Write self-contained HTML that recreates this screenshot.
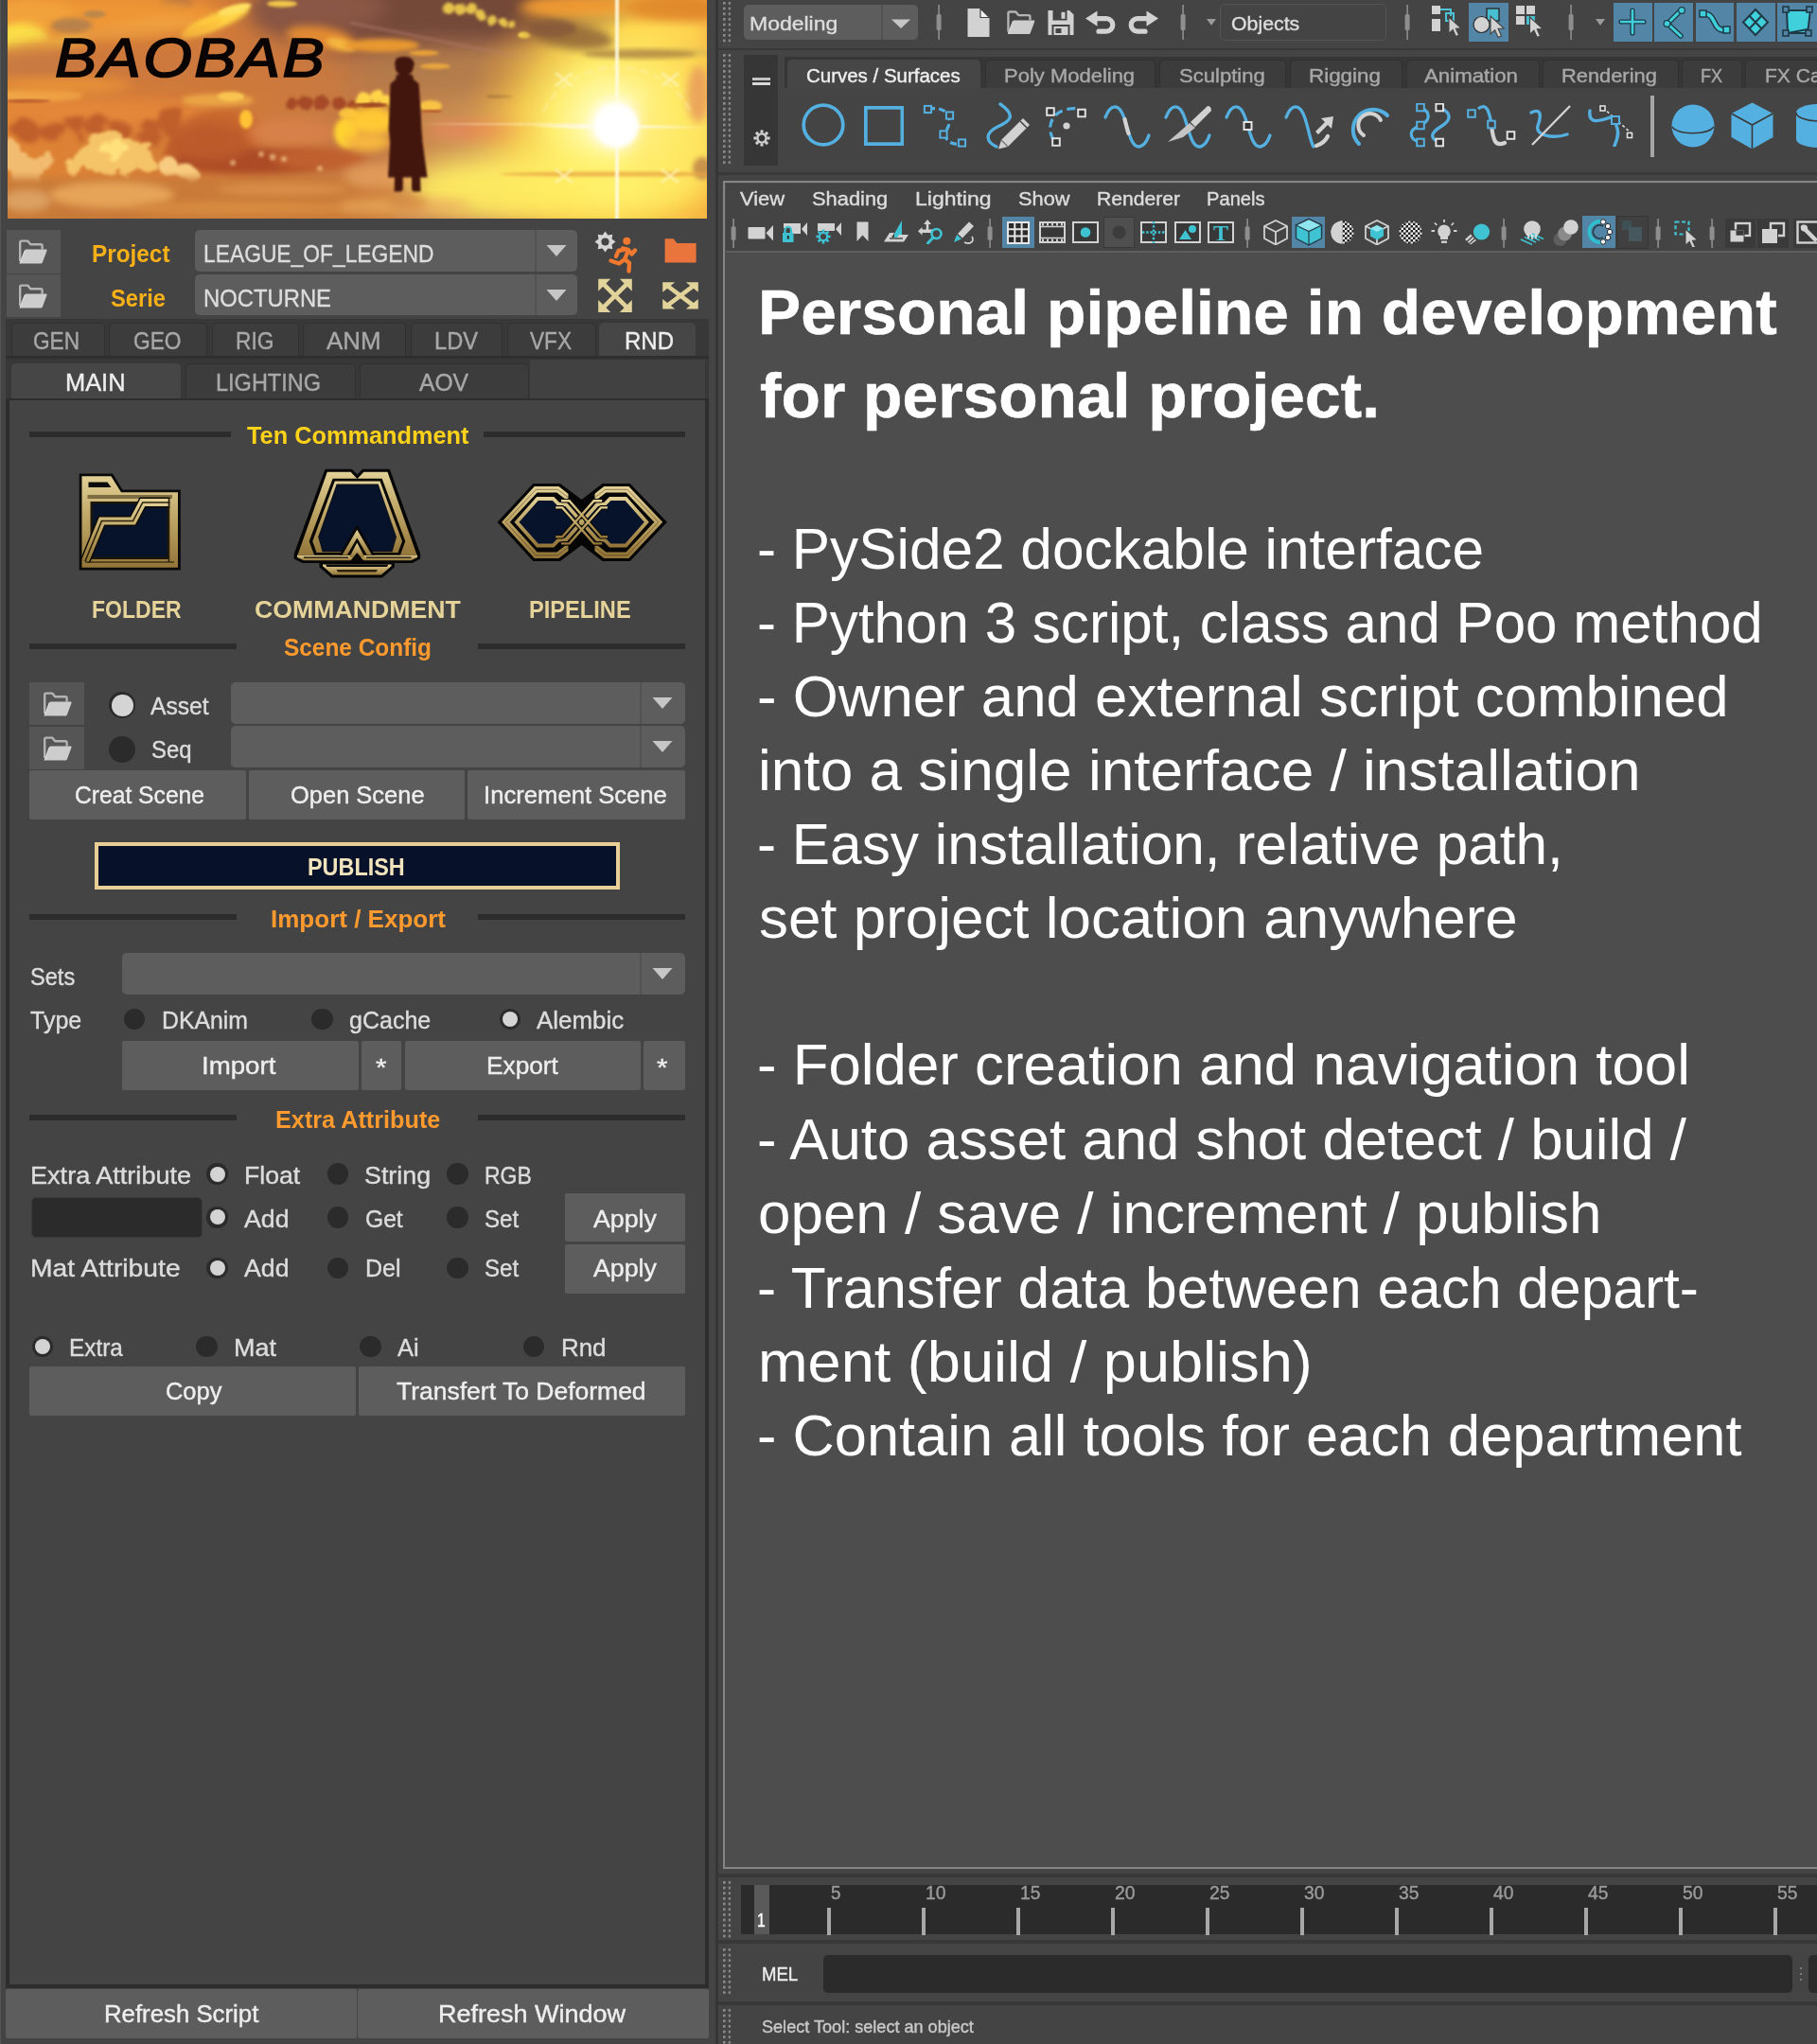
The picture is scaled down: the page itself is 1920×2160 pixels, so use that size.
<!DOCTYPE html>
<html lang="en">
<head>
<meta charset="utf-8">
<title>Baobab pipeline</title>
<style>
html,body{margin:0;padding:0;}
body{width:1920px;height:2160px;overflow:hidden;background:#444;position:relative;font-family:"Liberation Sans",sans-serif;}
.sec{position:absolute;left:0;top:0;width:0;height:0;}
.b{position:absolute;display:block;box-sizing:border-box;}
.t{position:absolute;display:inline-block;white-space:pre;transform-origin:0 0;}
.u{-webkit-text-stroke:0.4px;}
.ttl{-webkit-text-stroke:0.5px;}
.bao{-webkit-text-stroke:1.7px #0a0503;letter-spacing:2px;filter:blur(0.5px);}
</style>
</head>
<body>
<main id="maya-workspace" class="sec">
<div class="b" style="left:755.5px;top:0px;width:3.5px;height:2160px;background:#363636;"></div>
<div class="b" style="left:758.5px;top:50.6px;width:1161.5px;height:2.8px;background:#383838;"></div>
<svg class="b" style="left:764.15px;top:2.25px;" width="8.4" height="45.36" viewBox="0 0 8.4 45.36"><defs><pattern id="dp1" width="5.7" height="5.67" patternUnits="userSpaceOnUse"><rect x="0" y="0" width="2.5" height="2.5" rx="0.4" fill="#929292"/></pattern></defs><rect x="0" y="0" width="8.3" height="45.36" fill="url(#dp1)"/></svg>
<div class="b" style="left:785.6px;top:4.6px;width:184.1px;height:37.2px;background:#5d5d5d;border-radius:5px;"></div>
<div class="b" style="left:930.6px;top:4.6px;width:2px;height:37.2px;background:#525252;"></div>
<svg class="b" style="left:942px;top:19.5px;" width="20" height="10.5" viewBox="0 0 20 10.5"><path d="M0 0.5 H20 L10 10 Z" fill="#c6c6c6"/></svg>
<span class="t u" style="left:791.8px;top:15.05px;font-size:20.5px;line-height:20.5px;color:#dcdcdc;transform:scaleX(1.1202);">Modeling</span>
<svg class="b" style="left:987.6px;top:5px;" width="8" height="37" viewBox="0 0 8 37"><rect x="3.3" y="0" width="1.6" height="37" fill="#8e8e8e"/><rect x="1.6" y="9.99" width="5" height="17.02" rx="1.5" fill="#8e8e8e"/></svg>
<svg class="b" style="left:1021px;top:8px;" width="26" height="32" viewBox="0 0 26 32"><path d="M1.5 1 H15 L24.5 10.5 V31 H1.5 Z" fill="#d2d2d2"/><path d="M15 1 V10.5 H24.5 Z" fill="#f2f2f2" stroke="#444" stroke-width="1.2"/></svg>
<svg class="b" style="left:1060.5px;top:9px;" width="35" height="29.5" viewBox="0 0 33 30"><path d="M3.2 25 V5.2 Q3.2 3.6 4.8 3.6 H11.2 L14.2 7.2 H25.2 Q26.6 7.2 26.6 8.8 V12.5" fill="none" stroke="#b4b4b4" stroke-width="2.4" stroke-linejoin="round"/><path d="M3 27.5 L8.2 13.6 Q8.6 12.6 9.8 12.6 H30.6 Q32 12.6 31.5 14 L26.8 26.6 Q26.4 27.5 25.2 27.5 Z" fill="#cdcdcd"/><path d="M3 27.5 L8.2 13.6" stroke="#e4e4e4" stroke-width="1" fill="none"/></svg>
<svg class="b" style="left:1105.5px;top:8.5px;" width="30" height="30" viewBox="0 0 30 30"><path d="M1.5 2 H24 L28.5 6.5 V28 H1.5 Z" fill="#d2d2d2"/><rect x="6.5" y="2" width="15" height="10.5" fill="#444"/><rect x="15.5" y="3.8" width="4" height="7" fill="#d2d2d2"/><rect x="5.5" y="17" width="19" height="11" fill="#444"/><rect x="7.5" y="19" width="15" height="9" fill="#d2d2d2"/><rect x="9.5" y="21" width="6" height="5" fill="#444"/></svg>
<svg class="b" style="left:1146px;top:11px;" width="34" height="25" viewBox="0 0 34 25"><g><path d="M13 8.6 H23 A6.8 6.8 0 0 1 23 22.2 H15" fill="none" stroke="#d2d2d2" stroke-width="5.2" stroke-linecap="round"/><path d="M1 8.6 L13.5 0.5 V16.8 Z" fill="#d2d2d2"/></g></svg>
<svg class="b" style="left:1191px;top:11px;" width="34" height="25" viewBox="0 0 34 25"><g transform="translate(34 0) scale(-1 1)"><path d="M13 8.6 H23 A6.8 6.8 0 0 1 23 22.2 H15" fill="none" stroke="#d2d2d2" stroke-width="5.2" stroke-linecap="round"/><path d="M1 8.6 L13.5 0.5 V16.8 Z" fill="#d2d2d2"/></g></svg>
<svg class="b" style="left:1245.7px;top:5px;" width="8" height="37" viewBox="0 0 8 37"><rect x="3.3" y="0" width="1.6" height="37" fill="#8e8e8e"/><rect x="1.6" y="9.99" width="5" height="17.02" rx="1.5" fill="#8e8e8e"/></svg>
<svg class="b" style="left:1274.6px;top:20px;" width="10" height="7" viewBox="0 0 10 7"><path d="M0 0 H10 L5 7 Z" fill="#9a9a9a"/></svg>
<div class="b" style="left:1289.4px;top:3.8px;width:175.3px;height:39.2px;background:#444;border-radius:5px;border:1.5px solid #545454;"></div>
<span class="t u" style="left:1300.5px;top:15.05px;font-size:20.5px;line-height:20.5px;color:#dcdcdc;transform:scaleX(1.0388);">Objects</span>
<svg class="b" style="left:1483.3px;top:5px;" width="8" height="37" viewBox="0 0 8 37"><rect x="3.3" y="0" width="1.6" height="37" fill="#8e8e8e"/><rect x="1.6" y="9.99" width="5" height="17.02" rx="1.5" fill="#8e8e8e"/></svg>
<svg class="b" style="left:1511px;top:5px;" width="36" height="36" viewBox="0 0 36 36"><rect x="2" y="1" width="9" height="9" fill="#d2d2d2"/><rect x="2" y="15" width="9" height="9" fill="#d2d2d2"/><rect x="2" y="26" width="7" height="3" fill="#d2d2d2" opacity="0"/><rect x="2" y="15" width="9" height="9" fill="#d2d2d2"/><rect x="2" y="20" width="9" height="9" fill="#d2d2d2" opacity="0"/><path d="M11 5 H22 V12" fill="none" stroke="#4fc3d6" stroke-width="2"/><rect x="17" y="9" width="8" height="8" fill="none" stroke="#4fc3d6" stroke-width="2"/><rect x="2" y="19" width="9" height="9" fill="#d2d2d2"/><path transform="translate(20 13) scale(1.05)" d="M0 0 L0 16.5 L4 12.8 L7 19.5 L10 18.2 L7 11.6 L12.3 11.3 Z" fill="#d2d2d2" stroke="#444" stroke-width="1"/></svg>
<div class="b" style="left:1552px;top:2.8px;width:41.6px;height:41.2px;background:#5285a6;"></div>
<svg class="b" style="left:1553px;top:3.5px;" width="40" height="40" viewBox="0 0 40 40"><rect x="18" y="5" width="13" height="13" fill="#47bfd0" stroke="#2b2b2b" stroke-width="1.4"/><circle cx="12.5" cy="22" r="8.5" fill="#d2d2d2" stroke="#2b2b2b" stroke-width="1.2"/><path transform="translate(22 13) scale(1.15)" d="M0 0 L0 16.5 L4 12.8 L7 19.5 L10 18.2 L7 11.6 L12.3 11.3 Z" fill="#d2d2d2" stroke="#444" stroke-width="1"/></svg>
<svg class="b" style="left:1600.5px;top:5px;" width="34" height="36" viewBox="0 0 34 36"><rect x="1" y="1" width="9" height="9" fill="#d2d2d2"/><rect x="12" y="1" width="9" height="9" fill="#d2d2d2"/><rect x="1" y="12" width="9" height="9" fill="#d2d2d2"/><rect x="12" y="12" width="9" height="9" fill="#47bfd0"/><path transform="translate(15.5 13) scale(1.1)" d="M0 0 L0 16.5 L4 12.8 L7 19.5 L10 18.2 L7 11.6 L12.3 11.3 Z" fill="#d2d2d2" stroke="#444" stroke-width="1"/></svg>
<svg class="b" style="left:1656px;top:5px;" width="8" height="37" viewBox="0 0 8 37"><rect x="3.3" y="0" width="1.6" height="37" fill="#8e8e8e"/><rect x="1.6" y="9.99" width="5" height="17.02" rx="1.5" fill="#8e8e8e"/></svg>
<svg class="b" style="left:1685.7px;top:20px;" width="10" height="7" viewBox="0 0 10 7"><path d="M0 0 H10 L5 7 Z" fill="#9a9a9a"/></svg>
<div class="b" style="left:1704.6px;top:2.8px;width:41.1px;height:41.2px;background:#5285a6;"></div>
<svg class="b" style="left:1705.15px;top:3.4px;" width="40" height="40" viewBox="0 0 40 40"><path d="M20 8 V32 M8 20 H32" stroke="#1f3a46" stroke-width="5.2" stroke-linecap="round"/><path d="M20 8 V32 M8 20 H32" stroke="#3fd0dc" stroke-width="2.6" stroke-linecap="round"/></svg>
<div class="b" style="left:1748px;top:2.8px;width:41px;height:41.2px;background:#5285a6;"></div>
<svg class="b" style="left:1748.5px;top:3.4px;" width="40" height="40" viewBox="0 0 40 40"><path d="M27 8 L13 22 L27 35" fill="none" stroke="#1f3a46" stroke-width="5.5" stroke-linecap="round" stroke-linejoin="round"/><path d="M27 8 L13 22 L27 35" fill="none" stroke="#3fd0dc" stroke-width="3" stroke-linecap="round" stroke-linejoin="round"/><circle cx="28" cy="8" r="3.4" fill="#3fd0dc" stroke="#1f3a46" stroke-width="1.2"/><circle cx="12.5" cy="22" r="3.4" fill="#3fd0dc" stroke="#1f3a46" stroke-width="1.2"/></svg>
<div class="b" style="left:1791.7px;top:2.8px;width:40.7px;height:41.2px;background:#5285a6;"></div>
<svg class="b" style="left:1792.05px;top:3.4px;" width="40" height="40" viewBox="0 0 40 40"><path d="M8 12 C22 10 16 30 32 29" fill="none" stroke="#1f3a46" stroke-width="6.5"/><path d="M8 12 C22 10 16 30 32 29" fill="none" stroke="#3fd0dc" stroke-width="3.6"/><rect x="4" y="8" width="7" height="7" fill="#3fd0dc" stroke="#1f3a46" stroke-width="1.5"/><rect x="29" y="25" width="7" height="7" fill="#3fd0dc" stroke="#1f3a46" stroke-width="1.5"/></svg>
<div class="b" style="left:1835.2px;top:2.8px;width:40.4px;height:41.2px;background:#5285a6;"></div>
<svg class="b" style="left:1835.4px;top:3.4px;" width="40" height="40" viewBox="0 0 40 40"><path d="M20 7 L33 20.5 L20 34 L7 20.5 Z" fill="#3fd0dc" stroke="#1f3a46" stroke-width="2"/><path d="M13.5 13.8 L26.5 27.3 M26.5 13.8 L13.5 27.3" stroke="#1f3a46" stroke-width="2"/></svg>
<div class="b" style="left:1878.4px;top:2.8px;width:42.6px;height:41.2px;background:#5285a6;"></div>
<svg class="b" style="left:1879.5px;top:3.4px;" width="40" height="40" viewBox="0 0 40 40"><path d="M8 8 H33 L30 32 H9 Z" fill="#3fd0dc" stroke="#1f3a46" stroke-width="2"/><path d="M9 32 L30 28" stroke="#1f3a46" stroke-width="2"/><rect x="4" y="4" width="6" height="6" fill="#5285a6" stroke="#1f3a46" stroke-width="1.6"/><rect x="29" y="4" width="6" height="6" fill="#5285a6" stroke="#1f3a46" stroke-width="1.6"/><rect x="4" y="29" width="6" height="6" fill="#5285a6" stroke="#1f3a46" stroke-width="1.6"/><rect x="28" y="29" width="6" height="6" fill="#5285a6" stroke="#1f3a46" stroke-width="1.6"/></svg>
<svg class="b" style="left:764.15px;top:57.05px;" width="8.4" height="119.07" viewBox="0 0 8.4 119.07"><defs><pattern id="dp2" width="5.7" height="5.67" patternUnits="userSpaceOnUse"><rect x="0" y="0" width="2.5" height="2.5" rx="0.4" fill="#929292"/></pattern></defs><rect x="0" y="0" width="8.3" height="119.07" fill="url(#dp2)"/></svg>
<div class="b" style="left:785.5px;top:57.8px;width:36.7px;height:117.7px;background:#363636;"></div>
<div class="b" style="left:794.6px;top:81.7px;width:19px;height:3.3px;background:#c4c4c4;"></div>
<div class="b" style="left:794.6px;top:87.2px;width:19px;height:2.6px;background:#d8d8d8;"></div>
<svg class="b" style="left:794.8px;top:136.4px;" width="20" height="20" viewBox="0 0 20 20"><g transform="translate(10 10)" fill="none" stroke="#d0d0d0"><circle r="4.6" stroke-width="2.4"/><path d="M0 -5.4 V-8.6" stroke-width="3" transform="rotate(0)"/><path d="M0 -5.4 V-8.6" stroke-width="3" transform="rotate(45)"/><path d="M0 -5.4 V-8.6" stroke-width="3" transform="rotate(90)"/><path d="M0 -5.4 V-8.6" stroke-width="3" transform="rotate(135)"/><path d="M0 -5.4 V-8.6" stroke-width="3" transform="rotate(180)"/><path d="M0 -5.4 V-8.6" stroke-width="3" transform="rotate(225)"/><path d="M0 -5.4 V-8.6" stroke-width="3" transform="rotate(270)"/><path d="M0 -5.4 V-8.6" stroke-width="3" transform="rotate(315)"/></g></svg>
<div class="b" style="left:828.5px;top:59.6px;width:1091.5px;height:33.1px;background:#363636;"></div>
<div class="b" style="left:832px;top:63px;width:203.6px;height:29.7px;background:#464646;border-radius:5px 5px 0 0;"></div>
<span class="t u" style="left:851.9px;top:69.65px;font-size:20.5px;line-height:20.5px;color:#eee;transform:scaleX(0.9986);">Curves / Surfaces</span>
<div class="b" style="left:1040.8px;top:63px;width:180.2px;height:29.7px;background:#3c3c3c;border-radius:5px 5px 0 0;border:1px solid #313131;border-bottom:none;"></div>
<span class="t u" style="left:1060.5px;top:69.65px;font-size:20.5px;line-height:20.5px;color:#a8a8a8;transform:scaleX(1.0725);">Poly Modeling</span>
<div class="b" style="left:1225px;top:63px;width:134px;height:29.7px;background:#3c3c3c;border-radius:5px 5px 0 0;border:1px solid #313131;border-bottom:none;"></div>
<span class="t u" style="left:1246px;top:69.65px;font-size:20.5px;line-height:20.5px;color:#a8a8a8;transform:scaleX(1.0754);">Sculpting</span>
<div class="b" style="left:1363px;top:63px;width:118.5px;height:29.7px;background:#3c3c3c;border-radius:5px 5px 0 0;border:1px solid #313131;border-bottom:none;"></div>
<span class="t u" style="left:1383px;top:69.65px;font-size:20.5px;line-height:20.5px;color:#a8a8a8;transform:scaleX(1.0916);">Rigging</span>
<div class="b" style="left:1485.6px;top:63px;width:141.1px;height:29.7px;background:#3c3c3c;border-radius:5px 5px 0 0;border:1px solid #313131;border-bottom:none;"></div>
<span class="t u" style="left:1505px;top:69.65px;font-size:20.5px;line-height:20.5px;color:#a8a8a8;transform:scaleX(1.0859);">Animation</span>
<div class="b" style="left:1630px;top:63px;width:143.5px;height:29.7px;background:#3c3c3c;border-radius:5px 5px 0 0;border:1px solid #313131;border-bottom:none;"></div>
<span class="t u" style="left:1650px;top:69.65px;font-size:20.5px;line-height:20.5px;color:#a8a8a8;transform:scaleX(1.0656);">Rendering</span>
<div class="b" style="left:1776.7px;top:63px;width:64.3px;height:29.7px;background:#3c3c3c;border-radius:5px 5px 0 0;border:1px solid #313131;border-bottom:none;"></div>
<span class="t u" style="left:1797px;top:69.65px;font-size:20.5px;line-height:20.5px;color:#a8a8a8;transform:scaleX(0.8778);">FX</span>
<div class="b" style="left:1844.4px;top:63px;width:145.6px;height:29.7px;background:#3c3c3c;border-radius:5px 5px 0 0;border:1px solid #313131;border-bottom:none;"></div>
<span class="t u" style="left:1865px;top:69.65px;font-size:20.5px;line-height:20.5px;color:#a8a8a8;transform:scaleX(1.0270);">FX Caching</span>
<svg class="b" style="left:847.3px;top:109.4px;" width="46" height="46" viewBox="0 0 46 46"><circle cx="23" cy="23" r="20.8" fill="none" stroke="#54b0e0" stroke-width="3.7"/></svg>
<svg class="b" style="left:913.2px;top:112px;" width="42.2" height="42" viewBox="0 0 42.2 42"><rect x="1.8" y="1.8" width="38.6" height="38.4" fill="none" stroke="#54b0e0" stroke-width="3.8"/></svg>
<svg class="b" style="left:974.5px;top:109.5px;" width="48" height="47" viewBox="0 0 48 47"><path d="M6 5 C26 2 32 14 26 26 C20 38 30 44 42 42" fill="none" stroke="#54b0e0" stroke-width="3.2" stroke-dasharray="7 4"/><rect x="1.9" y="1.9" width="7.2" height="7.2" fill="#444" stroke="#54b0e0" stroke-width="2"/><rect x="24.9" y="8.4" width="7.2" height="7.2" fill="#444" stroke="#54b0e0" stroke-width="2"/><rect x="18.4" y="28.4" width="7.2" height="7.2" fill="#444" stroke="#54b0e0" stroke-width="2"/><rect x="37.9" y="37.4" width="7.2" height="7.2" fill="#444" stroke="#54b0e0" stroke-width="2"/></svg>
<svg class="b" style="left:1039.5px;top:108px;" width="50" height="50" viewBox="0 0 50 50"><path d="M17 2 C34 14 28 20 14 26 C0 33 2 42 13 47" fill="none" stroke="#54b0e0" stroke-width="3.4" stroke-linecap="round"/><path d="M18 40 L41 17 L48 24 L25 47 L15 49.5 Z" fill="#d2d2d2"/><path d="M38 20 L45 27" stroke="#444" stroke-width="1.6"/><path d="M18 40 L25 47" stroke="#777" stroke-width="1.4"/></svg>
<svg class="b" style="left:1104.5px;top:110px;" width="46" height="46" viewBox="0 0 46 46"><path d="M8 38 C-2 18 12 2 36 5" fill="none" stroke="#54b0e0" stroke-width="3.2" stroke-dasharray="9 5"/><circle cx="22" cy="23" r="3.6" fill="#d2d2d2"/><rect x="1.2" y="4.2" width="7.6" height="7.6" fill="#333" stroke="#e0e0e0" stroke-width="2"/><rect x="34.2" y="5.7" width="7.6" height="7.6" fill="#333" stroke="#e0e0e0" stroke-width="2"/><rect x="7.2" y="36.2" width="7.6" height="7.6" fill="#333" stroke="#e0e0e0" stroke-width="2"/></svg>
<svg class="b" style="left:1165.6px;top:108.8px;overflow:visible;" width="52" height="48" viewBox="0 0 52 48"><path d="M2 15 C7 2 16 -2 22 16 C27 32 30 47 38 46 C43 45 46 40 48 34" fill="none" stroke="#54b0e0" stroke-width="3.4" stroke-linecap="round"/><path d="M22.5 17 C24 23 25 28 26.5 32" fill="none" stroke="#d2d2d2" stroke-width="4.2" stroke-linecap="round"/></svg>
<svg class="b" style="left:1230.4px;top:108.8px;overflow:visible;" width="52" height="48" viewBox="0 0 52 48"><path d="M2 15 C7 2 16 -2 22 16 C27 32 30 47 38 46 C43 45 46 40 48 34" fill="none" stroke="#54b0e0" stroke-width="3.4" stroke-linecap="round"/><path d="M28 20 L46 3 Q50 3 50 8 L33 25 Z" fill="#d2d2d2"/><path d="M4 41 L27 21 L33 26 L20 36 Z" fill="#c4c4c4"/></svg>
<svg class="b" style="left:1294px;top:108.8px;overflow:visible;" width="52" height="48" viewBox="0 0 52 48"><path d="M2 15 C7 2 16 -2 22 16 C27 32 30 47 38 46 C43 45 46 40 48 34" fill="none" stroke="#54b0e0" stroke-width="3.4" stroke-linecap="round"/><rect x="20.5" y="20" width="8" height="8" fill="#333" stroke="#e4e4e4" stroke-width="2"/></svg>
<svg class="b" style="left:1357px;top:108.8px;overflow:visible;" width="52" height="48" viewBox="0 0 52 48"><path d="M2 15 C7 2 16 -2 22 16 C27 32 28 42 31 46" fill="none" stroke="#54b0e0" stroke-width="3.4" stroke-linecap="round"/><path d="M34 45 C40 43 44 39 46 35" fill="none" stroke="#d2d2d2" stroke-width="4.2" stroke-linecap="round"/><path d="M33 30 L43 20 L39 16 L52 14 L50 27 L46 23 L36 33 Z" fill="#d2d2d2"/></svg>
<svg class="b" style="left:1424px;top:108.5px;" width="50" height="48" viewBox="0 0 50 48"><path d="M12 43 A21 21 0 1 1 42 13" fill="none" stroke="#54b0e0" stroke-width="4" stroke-linecap="round"/><path d="M17 34 A12.5 12.5 0 1 1 35 18" fill="none" stroke="#d2d2d2" stroke-width="4" stroke-linecap="round"/></svg>
<svg class="b" style="left:1486.5px;top:108.5px;" width="47" height="48" viewBox="0 0 47 48"><path d="M14 4.5 C25 9 25 18 14 23.5 C1 28 1 38 14 41.5" fill="none" stroke="#54b0e0" stroke-width="3.2"/><path d="M34.2 4.5 C47 10 47 18 36 24.5 C25 31 23 37 34.2 41.5" fill="none" stroke="#54b0e0" stroke-width="3.4"/><rect x="10.2" y="0.7" width="7.6" height="7.6" fill="#444" stroke="#54b0e0" stroke-width="2"/><rect x="10.2" y="19.7" width="7.6" height="7.6" fill="#444" stroke="#54b0e0" stroke-width="2"/><rect x="10.2" y="37.7" width="7.6" height="7.6" fill="#444" stroke="#54b0e0" stroke-width="2"/><rect x="30.4" y="0.7" width="7.6" height="7.6" fill="#333" stroke="#e0e0e0" stroke-width="2"/><rect x="30.4" y="37.7" width="7.6" height="7.6" fill="#333" stroke="#e0e0e0" stroke-width="2"/></svg>
<svg class="b" style="left:1549.7px;top:108.6px;" width="52" height="47" viewBox="0 0 52 47"><path d="M12 6 C22 -2 24 12 26 22" fill="none" stroke="#54b0e0" stroke-width="3.4"/><path d="M26 24 C28 40 30 46 40 42" fill="none" stroke="#d2d2d2" stroke-width="4.2" stroke-linecap="round"/><rect x="1.2" y="7.2" width="7.6" height="7.6" fill="#444" stroke="#54b0e0" stroke-width="2"/><rect x="22.2" y="18.7" width="7.6" height="7.6" fill="#444" stroke="#54b0e0" stroke-width="2"/><rect x="42.7" y="30.2" width="7.6" height="7.6" fill="#333" stroke="#e0e0e0" stroke-width="2"/></svg>
<svg class="b" style="left:1615.6px;top:110.5px;" width="44" height="44" viewBox="0 0 44 44"><path d="M2 8 C14 2 12 14 9 22 C6 32 24 36 40 31" fill="none" stroke="#54b0e0" stroke-width="3.4" stroke-linecap="round"/><path d="M3 42 L43 1" stroke="#d2d2d2" stroke-width="2.4"/></svg>
<svg class="b" style="left:1678px;top:110.8px;" width="49" height="44" viewBox="0 0 49 44"><path d="M2 6 C0 22 14 16 24 13 M30 22 C34 30 30 38 28 43" fill="none" stroke="#54b0e0" stroke-width="3.4" stroke-linecap="round"/><path d="M16 3 L46 30" stroke="#d8d8d8" stroke-width="1.6" stroke-dasharray="3 2.5"/><rect x="13" y="1" width="5" height="5" fill="#333" stroke="#e0e0e0" stroke-width="1.6"/><rect x="25" y="12" width="8" height="8" fill="#444" stroke="#54b0e0" stroke-width="2"/><rect x="41.5" y="29.5" width="5" height="5" fill="#333" stroke="#e0e0e0" stroke-width="1.6"/></svg>
<div class="b" style="left:1744px;top:100.6px;width:4.4px;height:65.8px;background:#a6a6a6;"></div>
<svg class="b" style="left:1765.8px;top:109.8px;" width="46" height="46" viewBox="0 0 46 46"><circle cx="23" cy="23" r="22.5" fill="#54b0e0"/><path d="M0.8 24 C8 33 38 33 45.2 24" fill="none" stroke="#3a3a3a" stroke-width="1.6"/></svg>
<svg class="b" style="left:1829.4px;top:107.5px;" width="45" height="50" viewBox="0 0 45 50"><path d="M22.5 0.5 L44.5 12 V37 L22.5 49.5 L0.5 37 V12 Z" fill="#54b0e0"/><path d="M0.5 12 L22.5 24 L44.5 12 M22.5 24 V49.5" fill="none" stroke="#3a3a3a" stroke-width="1.6"/></svg>
<svg class="b" style="left:1897.6px;top:109px;" width="46" height="48" viewBox="0 0 46 48"><path d="M0 10 A23 9 0 0 1 46 10 V38 A23 9 0 0 1 0 38 Z" fill="#54b0e0"/><path d="M0 10 A23 9 0 0 0 46 10" fill="none" stroke="#3a3a3a" stroke-width="1.6"/></svg>
<div class="b" style="left:758.5px;top:182.4px;width:1161.5px;height:2.8px;background:#383838;"></div>
<div class="b" style="left:764px;top:191px;width:1157px;height:1783.5px;background:#4d4d4d;border:2.6px solid #858585;border-right:none;"></div>
<div class="b" style="left:766.6px;top:193.6px;width:1153.4px;height:71.2px;background:#444;"></div>
<div class="b" style="left:766.6px;top:264.8px;width:1153.4px;height:2.4px;background:#5e5e5e;"></div>
<span class="t u" style="left:781.8px;top:200.25px;font-size:20.5px;line-height:20.5px;color:#dcdcdc;transform:scaleX(1.0708);">View</span>
<span class="t u" style="left:857.7px;top:200.25px;font-size:20.5px;line-height:20.5px;color:#dcdcdc;transform:scaleX(1.0660);">Shading</span>
<span class="t u" style="left:966.5px;top:200.25px;font-size:20.5px;line-height:20.5px;color:#dcdcdc;transform:scaleX(1.1210);">Lighting</span>
<span class="t u" style="left:1076px;top:200.25px;font-size:20.5px;line-height:20.5px;color:#dcdcdc;transform:scaleX(1.0628);">Show</span>
<span class="t u" style="left:1158.9px;top:200.25px;font-size:20.5px;line-height:20.5px;color:#dcdcdc;transform:scaleX(1.0308);">Renderer</span>
<span class="t u" style="left:1275.4px;top:200.25px;font-size:20.5px;line-height:20.5px;color:#dcdcdc;transform:scaleX(0.9827);">Panels</span>
<svg class="b" style="left:770.7px;top:230.5px;" width="8" height="31" viewBox="0 0 8 31"><rect x="3.3" y="0" width="1.6" height="31.0" fill="#8e8e8e"/><rect x="1.6" y="8.37" width="5" height="14.26" rx="1.5" fill="#8e8e8e"/></svg>
<svg class="b" style="left:1042px;top:230.5px;" width="8" height="31" viewBox="0 0 8 31"><rect x="3.3" y="0" width="1.6" height="31.0" fill="#8e8e8e"/><rect x="1.6" y="8.37" width="5" height="14.26" rx="1.5" fill="#8e8e8e"/></svg>
<svg class="b" style="left:1313.7px;top:230.5px;" width="8" height="31" viewBox="0 0 8 31"><rect x="3.3" y="0" width="1.6" height="31.0" fill="#8e8e8e"/><rect x="1.6" y="8.37" width="5" height="14.26" rx="1.5" fill="#8e8e8e"/></svg>
<svg class="b" style="left:1584.5px;top:230.5px;" width="8" height="31" viewBox="0 0 8 31"><rect x="3.3" y="0" width="1.6" height="31.0" fill="#8e8e8e"/><rect x="1.6" y="8.37" width="5" height="14.26" rx="1.5" fill="#8e8e8e"/></svg>
<svg class="b" style="left:1748.4px;top:230.5px;" width="8" height="31" viewBox="0 0 8 31"><rect x="3.3" y="0" width="1.6" height="31.0" fill="#8e8e8e"/><rect x="1.6" y="8.37" width="5" height="14.26" rx="1.5" fill="#8e8e8e"/></svg>
<svg class="b" style="left:1805.3px;top:230.5px;" width="8" height="31" viewBox="0 0 8 31"><rect x="3.3" y="0" width="1.6" height="31.0" fill="#8e8e8e"/><rect x="1.6" y="8.37" width="5" height="14.26" rx="1.5" fill="#8e8e8e"/></svg>
<svg class="b" style="left:790px;top:235.5px;" width="28" height="20" viewBox="0 0 28 20"><rect x="0.5" y="4" width="18" height="12.5" rx="1" fill="#d2d2d2"/><path d="M27 2 V18.5 L19.5 10.2 Z" fill="#d2d2d2"/></svg>
<svg class="b" style="left:826.4px;top:234.5px;" width="28" height="23" viewBox="0 0 28 23"><path d="M2 1 H20 V12 H10 V6 H2 Z" fill="#d2d2d2"/><path d="M27 0 V14 L21 7 Z" fill="#d2d2d2"/><rect x="1" y="11" width="11.5" height="10" fill="#3fc3d3"/><path d="M3.5 11 V8 A3.2 3.2 0 0 1 10 8 V11" fill="none" stroke="#3fc3d3" stroke-width="2.2"/><rect x="5.8" y="14" width="2" height="3.6" fill="#2b2b2b"/></svg>
<svg class="b" style="left:862px;top:234.5px;" width="28" height="24" viewBox="0 0 28 24"><path d="M2 1 H20 V9 H2 Z" fill="#d2d2d2"/><path d="M27 0 V14 L21 7 Z" fill="#d2d2d2"/><g transform="translate(8 15)" fill="none" stroke="#3fc3d3"><circle r="4.2" stroke-width="2.2" fill="#444"/><path d="M0 -5 V-7.6" stroke-width="2.6" transform="rotate(0)"/><path d="M0 -5 V-7.6" stroke-width="2.6" transform="rotate(45)"/><path d="M0 -5 V-7.6" stroke-width="2.6" transform="rotate(90)"/><path d="M0 -5 V-7.6" stroke-width="2.6" transform="rotate(135)"/><path d="M0 -5 V-7.6" stroke-width="2.6" transform="rotate(180)"/><path d="M0 -5 V-7.6" stroke-width="2.6" transform="rotate(225)"/><path d="M0 -5 V-7.6" stroke-width="2.6" transform="rotate(270)"/><path d="M0 -5 V-7.6" stroke-width="2.6" transform="rotate(315)"/></g></svg>
<svg class="b" style="left:904.5px;top:234px;" width="13" height="22" viewBox="0 0 13 22"><path d="M0.5 0.5 H12.5 V21 L6.5 14.5 L0.5 21 Z" fill="#d2d2d2"/></svg>
<svg class="b" style="left:934px;top:233px;" width="26" height="23" viewBox="0 0 26 23"><path d="M11 14 L19 0 V15 L11 22 Z" fill="#3fc3d3"/><path d="M0 22.5 L6 13 H11 L8 18 H14 L16 15 H26 L21 22.5 Z" fill="#d2d2d2"/><path d="M6 19 H20" stroke="#444" stroke-width="1.4"/></svg>
<svg class="b" style="left:969.7px;top:232px;" width="27" height="26" viewBox="0 0 27 26"><path d="M10 0 L14 5 H11.3 V10.5 H16 V14 H4.5 V16.5 L0 12.2 L4.5 8 V10.5 H8.7 V5 H6 Z" fill="#d2d2d2"/><circle cx="19.5" cy="15" r="5" fill="none" stroke="#3fc3d3" stroke-width="2.6"/><path d="M16 19 L10.5 25" stroke="#3fc3d3" stroke-width="3" stroke-linecap="round"/></svg>
<svg class="b" style="left:1007px;top:233px;" width="24" height="26" viewBox="0 0 24 26"><path d="M5 14 L17 1.5 L22 6 L10 18.5 Z" fill="#d2d2d2"/><path d="M4 15 L9 19.5 L1 23 Z" fill="#3fc3d3"/><path d="M12 23 C18 26 23 22 20 17" fill="none" stroke="#d2d2d2" stroke-width="1.6"/></svg>
<div class="b" style="left:1058.6px;top:228.7px;width:34.1px;height:33.8px;background:#5285a6;"></div>
<svg class="b" style="left:1063.6px;top:233.6px;" width="24" height="24" viewBox="0 0 24 24"><rect x="1" y="1" width="22" height="22" fill="#2b2b2b" stroke="#e6e6e6" stroke-width="2"/><path d="M8.3 1 V23 M15.6 1 V23 M1 8.3 H23 M1 15.6 H23" stroke="#e6e6e6" stroke-width="2"/></svg>
<svg class="b" style="left:1098px;top:234.3px;" width="28" height="23" viewBox="0 0 28 23"><rect x="1" y="1" width="26" height="21" fill="#383838" stroke="#d2d2d2" stroke-width="2"/><path d="M1 5.5 H27 M1 17.5 H27" stroke="#d2d2d2" stroke-width="1.6"/><rect x="3" y="2" width="2" height="2.5" fill="#d2d2d2"/><rect x="3" y="18.5" width="2" height="2.5" fill="#d2d2d2"/><rect x="8" y="2" width="2" height="2.5" fill="#d2d2d2"/><rect x="8" y="18.5" width="2" height="2.5" fill="#d2d2d2"/><rect x="13" y="2" width="2" height="2.5" fill="#d2d2d2"/><rect x="13" y="18.5" width="2" height="2.5" fill="#d2d2d2"/><rect x="18" y="2" width="2" height="2.5" fill="#d2d2d2"/><rect x="18" y="18.5" width="2" height="2.5" fill="#d2d2d2"/><rect x="23" y="2" width="2" height="2.5" fill="#d2d2d2"/><rect x="23" y="18.5" width="2" height="2.5" fill="#d2d2d2"/></svg>
<svg class="b" style="left:1133px;top:234.3px;" width="28" height="23" viewBox="0 0 28 23"><rect x="1" y="1" width="26" height="21" fill="#383838" stroke="#d2d2d2" stroke-width="2"/><circle cx="14" cy="11.5" r="5.3" fill="#3fc3d3"/></svg>
<div class="b" style="left:1166px;top:229px;width:33px;height:33px;background:#4f4f4f;border:1.5px solid #3a3a3a;"></div>
<svg class="b" style="left:1166px;top:229px;" width="33" height="33" viewBox="0 0 33 33"><circle cx="16.5" cy="16.5" r="7" fill="#3c3c3c"/></svg>
<svg class="b" style="left:1204.8px;top:234.3px;" width="28" height="23" viewBox="0 0 28 23"><rect x="1" y="1" width="26" height="21" fill="#383838" stroke="#d2d2d2" stroke-width="2"/><path d="M14 0 V23 M2 11.5 H26" stroke="#3fc3d3" stroke-width="2.4" stroke-dasharray="2.4 1.8"/></svg>
<svg class="b" style="left:1240.5px;top:234.3px;" width="28" height="23" viewBox="0 0 28 23"><rect x="1" y="1" width="26" height="21" fill="#383838" stroke="#d2d2d2" stroke-width="2"/><circle cx="19" cy="8" r="4" fill="#3fc3d3"/><path d="M5 19 L11.5 9 L18 19 Z" fill="#3fc3d3"/></svg>
<svg class="b" style="left:1276.2px;top:234.3px;" width="28" height="23" viewBox="0 0 28 23"><rect x="1" y="1" width="26" height="21" fill="#383838" stroke="#d2d2d2" stroke-width="2"/></svg>
<span class="t" style="left:1282.3px;top:235.03px;font-size:23px;line-height:23px;color:#3fc3d3;font-weight:bold;font-family:'Liberation Serif', serif;transform:scaleX(1.0428);">T</span>
<svg class="b" style="left:1334.5px;top:231.5px;" width="26" height="27.5" viewBox="0 0 26 27.5"><path d="M13 1 L25 7 V20 L13 26.5 L1 20 V7 Z" fill="none" stroke="#d2d2d2" stroke-width="1.8" stroke-linejoin="round"/><path d="M1 7 L13 13 L25 7 M13 13 V26.5" fill="none" stroke="#d2d2d2" stroke-width="1.8"/></svg>
<div class="b" style="left:1365.4px;top:228.7px;width:34.6px;height:33.8px;background:#5285a6;"></div>
<svg class="b" style="left:1367.6px;top:230.2px;" width="30" height="30.5" viewBox="0 0 30 30.5"><path d="M15 1.5 L28.5 8 V22 L15 29 L1.5 22 V8 Z" fill="#3fc3d3" stroke="#243a46" stroke-width="1.4" stroke-linejoin="round"/><path d="M15 1.5 L28.5 8 L15 14.5 L1.5 8 Z" fill="#8fe6ee" stroke="#243a46" stroke-width="1.2"/><path d="M15 14.5 V29" stroke="#243a46" stroke-width="1.2"/></svg>
<svg class="b" style="left:1405.5px;top:233px;" width="25" height="25" viewBox="0 0 25 25"><defs><pattern id="ck1" width="5" height="5" patternUnits="userSpaceOnUse"><rect width="5" height="5" fill="#1e1e1e"/><rect width="2.5" height="2.5" fill="#eee"/><rect x="2.5" y="2.5" width="2.5" height="2.5" fill="#eee"/></pattern></defs><circle cx="12.5" cy="12.5" r="12" fill="url(#ck1)"/><path d="M12.5 0.5 A12 12 0 0 0 12.5 24.5 A16 16 0 0 1 12.5 0.5 Z" fill="#d2d2d2"/><path d="M12.5 0.5 A12 12 0 0 0 12.5 24.5 Z" fill="#d2d2d2"/></svg>
<svg class="b" style="left:1441.7px;top:231.5px;" width="26" height="27.5" viewBox="0 0 26 27.5"><path d="M13 1 L25 7 V20 L13 26.5 L1 20 V7 Z" fill="none" stroke="#d2d2d2" stroke-width="1.8" stroke-linejoin="round"/><path d="M1 7 L13 13 L25 7 M13 13 V26.5" fill="none" stroke="#d2d2d2" stroke-width="1.8"/><path d="M13 6 L20 9.5 V17.5 L13 21.5 L6 17.5 V9.5 Z" fill="#3fc3d3"/><path d="M13 6 L20 9.5 L13 13 L6 9.5 Z" fill="#8fe6ee"/></svg>
<svg class="b" style="left:1477.8px;top:233px;" width="25" height="25" viewBox="0 0 25 25"><defs><pattern id="ck2" width="5" height="5" patternUnits="userSpaceOnUse"><rect width="5" height="5" fill="#1e1e1e"/><rect width="2.5" height="2.5" fill="#eee"/><rect x="2.5" y="2.5" width="2.5" height="2.5" fill="#eee"/></pattern></defs><circle cx="12.5" cy="12.5" r="12" fill="url(#ck2)"/></svg>
<svg class="b" style="left:1511.5px;top:232px;" width="28" height="25" viewBox="0 0 28 25"><path d="M14 5.5 A7 7 0 0 1 18 18 V21 H10 V18 A7 7 0 0 1 14 5.5 Z" fill="#d2d2d2"/><rect x="11" y="22.5" width="6" height="2.4" fill="#d2d2d2"/><path d="M14 0 V3 M4 3.5 L6.3 6 M24 3.5 L21.7 6 M0.5 12 H4 M24 12 H27.5" stroke="#d2d2d2" stroke-width="1.8"/></svg>
<svg class="b" style="left:1547.4px;top:234px;" width="28" height="25" viewBox="0 0 28 25"><circle cx="18.5" cy="11" r="8.6" fill="#3fc3d3"/><path d="M1 19 L7 13.5 L13 20 L7 24.5 Z" fill="#d2d2d2"/><path d="M3 21.5 L9.5 15.5 M6 23 L12 17.5" stroke="#444" stroke-width="1.2"/></svg>
<svg class="b" style="left:1605.5px;top:233px;" width="26" height="27" viewBox="0 0 26 27"><circle cx="13" cy="9" r="8.8" fill="#d2d2d2"/><path d="M0 20 L14 26 L26 19 L12 14 Z" fill="none"/><path d="M1 20 L13 25.5 M5 17.5 L17 23 M9 15.5 L21 21 M13 14 L25 19.5" stroke="#3fc3d3" stroke-width="1.6"/><path d="M9 14 V19 M13 15 V20 M17 14.5 V19" stroke="#e8e8e8" stroke-width="1.6"/></svg>
<svg class="b" style="left:1640.5px;top:232px;" width="27" height="28" viewBox="0 0 27 28"><circle cx="7.5" cy="21" r="7" fill="#5e5e5e"/><circle cx="12.5" cy="15" r="7.4" fill="#8a8a8a"/><circle cx="19" cy="8" r="7.8" fill="#d2d2d2"/></svg>
<div class="b" style="left:1672.2px;top:228.4px;width:34.8px;height:34px;background:#5285a6;"></div>
<svg class="b" style="left:1674.6px;top:230.4px;" width="30" height="30" viewBox="0 0 30 30"><path d="M20 5 A11 11 0 1 0 20 25" fill="none" stroke="#2fc0d0" stroke-width="3.6"/><path d="M19 9 A7 7 0 1 0 19 21" fill="none" stroke="#24464f" stroke-width="2"/><circle cx="19" cy="4.5" r="2.7" fill="#f4f4f4" stroke="#2b2b2b" stroke-width="1"/><circle cx="24" cy="9" r="2.7" fill="#f4f4f4" stroke="#2b2b2b" stroke-width="1"/><circle cx="26" cy="15" r="2.7" fill="#f4f4f4" stroke="#2b2b2b" stroke-width="1"/><circle cx="24" cy="21" r="2.7" fill="#f4f4f4" stroke="#2b2b2b" stroke-width="1"/><circle cx="19" cy="25.5" r="2.7" fill="#f4f4f4" stroke="#2b2b2b" stroke-width="1"/></svg>
<div class="b" style="left:1708px;top:228.4px;width:34.3px;height:34.4px;background:#404040;border:1.5px solid #363636;"></div>
<svg class="b" style="left:1708px;top:228.4px;" width="34" height="34" viewBox="0 0 34 34"><rect x="6" y="5" width="10" height="10" fill="#3e5054"/><rect x="13" y="12" width="14" height="15" fill="#46585d"/></svg>
<svg class="b" style="left:1769px;top:233px;" width="27" height="28" viewBox="0 0 27 28"><rect x="1.5" y="1.5" width="14" height="13" fill="none" stroke="#3fc3d3" stroke-width="2.2" stroke-dasharray="4 2.6"/><path transform="translate(12 9) scale(1.05)" d="M0 0 L0 16.5 L4 12.8 L7 19.5 L10 18.2 L7 11.6 L12.3 11.3 Z" fill="#d2d2d2" stroke="#444" stroke-width="1"/></svg>
<div class="b" style="left:1822.5px;top:230.5px;width:32px;height:31px;background:#3a3a3a;"></div>
<svg class="b" style="left:1825px;top:234px;" width="27" height="24" viewBox="0 0 27 24"><rect x="9" y="2" width="15" height="13" fill="none" stroke="#d2d2d2" stroke-width="2.4"/><rect x="3" y="9" width="15" height="13" fill="#d2d2d2" stroke="#3a3a3a" stroke-width="1"/><rect x="9.5" y="9.5" width="8" height="5.2" fill="#3a3a3a"/></svg>
<div class="b" style="left:1857px;top:230.5px;width:33px;height:31px;background:#3a3a3a;"></div>
<svg class="b" style="left:1860px;top:234px;" width="27" height="24" viewBox="0 0 27 24"><path d="M11 8 V2 H25 V15 H19" fill="none" stroke="#d2d2d2" stroke-width="2.4"/><rect x="2" y="8" width="16" height="15" fill="#d2d2d2"/></svg>
<div class="b" style="left:1895px;top:230.5px;width:25px;height:31px;background:#3a3a3a;"></div>
<svg class="b" style="left:1897.6px;top:233px;" width="27" height="25" viewBox="0 0 27 25"><rect x="1.5" y="1.5" width="24" height="22" fill="none" stroke="#d2d2d2" stroke-width="2.4"/><path d="M7 7 L20 20" stroke="#d2d2d2" stroke-width="4.5" stroke-linecap="round"/><circle cx="8.5" cy="8" r="3.6" fill="#d2d2d2"/></svg>
<span class="t ttl" style="left:801.3px;top:296.28px;font-size:67px;line-height:67px;color:#ffffff;font-weight:bold;transform:scaleX(1.0112);">Personal pipeline in development</span>
<span class="t ttl" style="left:803px;top:383.78px;font-size:67px;line-height:67px;color:#ffffff;font-weight:bold;transform:scaleX(1.0111);">for personal project.</span>
<span class="t big" style="left:800px;top:549.86px;font-size:61px;line-height:61px;color:#ffffff;transform:scaleX(0.9891);">- PySide2 dockable interface</span>
<span class="t big" style="left:800px;top:627.86px;font-size:61px;line-height:61px;color:#ffffff;transform:scaleX(0.9857);">- Python 3 script, class and Poo method</span>
<span class="t big" style="left:800px;top:705.76px;font-size:61px;line-height:61px;color:#ffffff;transform:scaleX(1.0127);">- Owner and external script combined</span>
<span class="t big" style="left:800.7px;top:783.76px;font-size:61px;line-height:61px;color:#ffffff;transform:scaleX(1.0187);">into a single interface / installation</span>
<span class="t big" style="left:800px;top:861.66px;font-size:61px;line-height:61px;color:#ffffff;transform:scaleX(0.9891);">- Easy installation, relative path,</span>
<span class="t big" style="left:801.9px;top:939.66px;font-size:61px;line-height:61px;color:#ffffff;transform:scaleX(1.0147);">set project location anywhere</span>
<span class="t big" style="left:800px;top:1095.36px;font-size:61px;line-height:61px;color:#ffffff;transform:scaleX(1.0131);">- Folder creation and navigation tool</span>
<span class="t big" style="left:800px;top:1173.76px;font-size:61px;line-height:61px;color:#ffffff;transform:scaleX(1.0125);">- Auto asset and shot detect / build /</span>
<span class="t big" style="left:801px;top:1252.16px;font-size:61px;line-height:61px;color:#ffffff;transform:scaleX(1.0151);">open / save / increment / publish</span>
<span class="t big" style="left:800px;top:1330.56px;font-size:61px;line-height:61px;color:#ffffff;transform:scaleX(0.9913);">- Transfer data between each depart-</span>
<span class="t big" style="left:800.7px;top:1408.86px;font-size:61px;line-height:61px;color:#ffffff;transform:scaleX(1.0346);">ment (build / publish)</span>
<span class="t big" style="left:800px;top:1487.16px;font-size:61px;line-height:61px;color:#ffffff;transform:scaleX(1.0061);">- Contain all tools for each department</span>
<div class="b" style="left:758.5px;top:1980.3px;width:1161.5px;height:3.3px;background:#383838;"></div>
<svg class="b" style="left:764.15px;top:1987.65px;" width="8.4" height="62.37" viewBox="0 0 8.4 62.37"><defs><pattern id="dp3" width="5.7" height="5.67" patternUnits="userSpaceOnUse"><rect x="0" y="0" width="2.5" height="2.5" rx="0.4" fill="#929292"/></pattern></defs><rect x="0" y="0" width="8.3" height="62.37" fill="url(#dp3)"/></svg>
<div class="b" style="left:783.4px;top:1992.2px;width:1136.6px;height:52.1px;background:#2b2b2b;"></div>
<div class="b" style="left:796.8px;top:1992.2px;width:16.4px;height:52.1px;background:#595959;"></div>
<span class="t u" style="left:799.5px;top:2020.19px;font-size:19.5px;line-height:19.5px;color:#fff;transform:scaleX(0.8012);">1</span>
<div class="b" style="left:873.8px;top:2016.4px;width:3.8px;height:28.2px;background:#a8a8a8;"></div>
<span class="t u" style="left:877.9px;top:1991.49px;font-size:19.5px;line-height:19.5px;color:#9a9a9a;transform:scaleX(0.9669);">5</span>
<div class="b" style="left:973.8px;top:2016.4px;width:3.8px;height:28.2px;background:#a8a8a8;"></div>
<span class="t u" style="left:977.9px;top:1991.49px;font-size:19.5px;line-height:19.5px;color:#9a9a9a;transform:scaleX(0.9906);">10</span>
<div class="b" style="left:1073.8px;top:2016.4px;width:3.8px;height:28.2px;background:#a8a8a8;"></div>
<span class="t u" style="left:1077.9px;top:1991.49px;font-size:19.5px;line-height:19.5px;color:#9a9a9a;transform:scaleX(0.9906);">15</span>
<div class="b" style="left:1173.8px;top:2016.4px;width:3.8px;height:28.2px;background:#a8a8a8;"></div>
<span class="t u" style="left:1177.9px;top:1991.49px;font-size:19.5px;line-height:19.5px;color:#9a9a9a;transform:scaleX(0.9906);">20</span>
<div class="b" style="left:1273.8px;top:2016.4px;width:3.8px;height:28.2px;background:#a8a8a8;"></div>
<span class="t u" style="left:1277.9px;top:1991.49px;font-size:19.5px;line-height:19.5px;color:#9a9a9a;transform:scaleX(0.9906);">25</span>
<div class="b" style="left:1373.8px;top:2016.4px;width:3.8px;height:28.2px;background:#a8a8a8;"></div>
<span class="t u" style="left:1377.9px;top:1991.49px;font-size:19.5px;line-height:19.5px;color:#9a9a9a;transform:scaleX(0.9906);">30</span>
<div class="b" style="left:1473.8px;top:2016.4px;width:3.8px;height:28.2px;background:#a8a8a8;"></div>
<span class="t u" style="left:1477.9px;top:1991.49px;font-size:19.5px;line-height:19.5px;color:#9a9a9a;transform:scaleX(0.9906);">35</span>
<div class="b" style="left:1573.8px;top:2016.4px;width:3.8px;height:28.2px;background:#a8a8a8;"></div>
<span class="t u" style="left:1577.9px;top:1991.49px;font-size:19.5px;line-height:19.5px;color:#9a9a9a;transform:scaleX(0.9906);">40</span>
<div class="b" style="left:1673.8px;top:2016.4px;width:3.8px;height:28.2px;background:#a8a8a8;"></div>
<span class="t u" style="left:1677.9px;top:1991.49px;font-size:19.5px;line-height:19.5px;color:#9a9a9a;transform:scaleX(0.9906);">45</span>
<div class="b" style="left:1773.8px;top:2016.4px;width:3.8px;height:28.2px;background:#a8a8a8;"></div>
<span class="t u" style="left:1777.9px;top:1991.49px;font-size:19.5px;line-height:19.5px;color:#9a9a9a;transform:scaleX(0.9906);">50</span>
<div class="b" style="left:1873.8px;top:2016.4px;width:3.8px;height:28.2px;background:#a8a8a8;"></div>
<span class="t u" style="left:1877.9px;top:1991.49px;font-size:19.5px;line-height:19.5px;color:#9a9a9a;transform:scaleX(0.9906);">55</span>
<div class="b" style="left:758.5px;top:2050.4px;width:1161.5px;height:3.8px;background:#383838;"></div>
<svg class="b" style="left:764.15px;top:2059.15px;" width="8.4" height="51.03" viewBox="0 0 8.4 51.03"><defs><pattern id="dp4" width="5.7" height="5.67" patternUnits="userSpaceOnUse"><rect x="0" y="0" width="2.5" height="2.5" rx="0.4" fill="#929292"/></pattern></defs><rect x="0" y="0" width="8.3" height="51.03" fill="url(#dp4)"/></svg>
<span class="t u" style="left:804.8px;top:2076.45px;font-size:20.5px;line-height:20.5px;color:#eee;transform:scaleX(0.9062);">MEL</span>
<div class="b" style="left:870.3px;top:2065.5px;width:1023.7px;height:40.8px;background:#2b2b2b;border-radius:5px;"></div>
<svg class="b" style="left:1901px;top:2078px;" width="4" height="16" viewBox="0 0 4 16"><circle cx="2" cy="2" r="1.1" fill="#8a8a8a"/><circle cx="2" cy="8" r="1.1" fill="#8a8a8a"/><circle cx="2" cy="14" r="1.1" fill="#8a8a8a"/></svg>
<div class="b" style="left:1911px;top:2065.5px;width:19px;height:40.8px;background:#2b2b2b;border-radius:5px;"></div>
<div class="b" style="left:758.5px;top:2114.8px;width:1161.5px;height:3.8px;background:#383838;"></div>
<svg class="b" style="left:764.15px;top:2123.15px;" width="8.4" height="39.69" viewBox="0 0 8.4 39.69"><defs><pattern id="dp5" width="5.7" height="5.67" patternUnits="userSpaceOnUse"><rect x="0" y="0" width="2.5" height="2.5" rx="0.4" fill="#929292"/></pattern></defs><rect x="0" y="0" width="8.3" height="39.69" fill="url(#dp5)"/></svg>
<span class="t u" style="left:804.8px;top:2133.34px;font-size:18.5px;line-height:18.5px;color:#c8c8c8;transform:scaleX(0.9777);">Select Tool: select an object</span>
</main>
<aside id="baobab-panel" class="sec">
<div class="b" style="left:0px;top:0px;width:1.3px;height:2160px;background:#545454;"></div>
<svg class="b" style="left:8px;top:0px;" width="739" height="231" viewBox="0 0 739 231"><defs>
<linearGradient id="bgL" x1="0" y1="0" x2="1" y2="0">
<stop offset="0" stop-color="#e08434"/><stop offset="0.3" stop-color="#d27a38"/><stop offset="0.52" stop-color="#c47a46"/><stop offset="0.68" stop-color="#cf9656"/><stop offset="0.82" stop-color="#f2b848"/><stop offset="1" stop-color="#f2ae44"/>
</linearGradient>
<radialGradient id="sun" cx="644" cy="133" r="165" gradientUnits="userSpaceOnUse">
<stop offset="0" stop-color="#ffffff"/><stop offset="0.13" stop-color="#fffdf0"/><stop offset="0.22" stop-color="#fff9a8"/><stop offset="0.42" stop-color="#fff070" stop-opacity="0.95"/><stop offset="0.62" stop-color="#ffdc50" stop-opacity="0.7"/><stop offset="0.82" stop-color="#fcc040" stop-opacity="0.28"/><stop offset="1" stop-color="#f0a030" stop-opacity="0"/>
</radialGradient>
<filter id="b4" x="-30%" y="-30%" width="160%" height="160%"><feGaussianBlur stdDeviation="4"/></filter>
<filter id="b6" x="-30%" y="-30%" width="160%" height="160%"><feGaussianBlur stdDeviation="6"/></filter>
<filter id="b8" x="-30%" y="-30%" width="160%" height="160%"><feGaussianBlur stdDeviation="8"/></filter>
<filter id="b14" x="-40%" y="-40%" width="180%" height="180%"><feGaussianBlur stdDeviation="14"/></filter>
<filter id="b2" x="-30%" y="-30%" width="160%" height="160%"><feGaussianBlur stdDeviation="1.8"/></filter>
<filter id="b3" x="-30%" y="-30%" width="160%" height="160%"><feGaussianBlur stdDeviation="2.8"/></filter>
<filter id="b1" x="-10%" y="-10%" width="120%" height="120%"><feGaussianBlur stdDeviation="0.8"/></filter>
<filter id="tx" x="0" y="0" width="100%" height="100%"><feTurbulence type="fractalNoise" baseFrequency="0.022 0.045" numOctaves="4" seed="7" result="n"/><feColorMatrix in="n" type="matrix" values="0 0 0 0 1  0 0 0 0 0.75  0 0 0 0 0.3  1.6 0 0 0 -0.62"/></filter>
<filter id="tx2" x="0" y="0" width="100%" height="100%"><feTurbulence type="fractalNoise" baseFrequency="0.03 0.06" numOctaves="4" seed="23" result="n"/><feColorMatrix in="n" type="matrix" values="0 0 0 0 0.45  0 0 0 0 0.14  0 0 0 0 0.05  0 1.7 0 0 -0.68"/></filter>
<filter id="cl" x="-20%" y="-30%" width="140%" height="160%"><feTurbulence type="fractalNoise" baseFrequency="0.06 0.09" numOctaves="3" seed="4" result="n"/><feDisplacementMap in="SourceGraphic" in2="n" scale="16" xChannelSelector="R" yChannelSelector="G"/><feGaussianBlur stdDeviation="1.5"/></filter>
<filter id="cls" x="-20%" y="-30%" width="140%" height="160%"><feTurbulence type="fractalNoise" baseFrequency="0.08 0.1" numOctaves="2" seed="9" result="n"/><feDisplacementMap in="SourceGraphic" in2="n" scale="6" xChannelSelector="R" yChannelSelector="G"/><feGaussianBlur stdDeviation="1.6"/></filter>
<filter id="cl2" x="-20%" y="-30%" width="140%" height="160%"><feTurbulence type="fractalNoise" baseFrequency="0.035 0.07" numOctaves="3" seed="11" result="n"/><feDisplacementMap in="SourceGraphic" in2="n" scale="22" xChannelSelector="R" yChannelSelector="G"/><feGaussianBlur stdDeviation="2.4"/></filter>
<clipPath id="bc"><rect x="0" y="0" width="739" height="231"/></clipPath>
</defs>
<g clip-path="url(#bc)">
<rect x="0" y="0" width="739" height="231" fill="url(#bgL)"/>
<ellipse cx="455" cy="14" rx="200" ry="46" fill="#7c4e40" filter="url(#b14)"/>
<ellipse cx="470" cy="4" rx="150" ry="30" fill="#744839" filter="url(#b8)"/>
<ellipse cx="330" cy="8" rx="70" ry="24" fill="#8a5644" filter="url(#b8)"/>
<ellipse cx="480" cy="78" rx="120" ry="26" fill="#b07a4c" filter="url(#b14)" opacity="0.9"/>
<ellipse cx="178" cy="6" rx="18" ry="9" fill="#8a5a48" filter="url(#b3)"/>
<ellipse cx="110" cy="18" rx="120" ry="24" fill="#ee9636" filter="url(#b8)"/>
<ellipse cx="20" cy="14" rx="50" ry="16" fill="#f2a23a" filter="url(#b6)"/>
<ellipse cx="14" cy="42" rx="30" ry="17" fill="#ffe648" filter="url(#b4)"/>
<ellipse cx="40" cy="50" rx="50" ry="9" fill="#f9c040" filter="url(#b4)" transform="rotate(-12 40 50)"/>
<ellipse cx="68" cy="27" rx="22" ry="8" fill="#b8824c" filter="url(#b3)"/>
<ellipse cx="92" cy="15" rx="12" ry="4" fill="#bd884c" filter="url(#b2)"/>
<ellipse cx="140" cy="30" rx="60" ry="10" fill="#f0a040" filter="url(#b4)" opacity="0.9" transform="rotate(-8 140 30)"/>
<ellipse cx="222" cy="22" rx="36" ry="8" fill="#ffd444" filter="url(#b3)" transform="rotate(-22 222 22)"/>
<ellipse cx="205" cy="30" rx="24" ry="6" fill="#ffc23a" filter="url(#b3)" transform="rotate(-22 205 30)"/>
<ellipse cx="240" cy="10" rx="18" ry="4.5" fill="#ffe060" filter="url(#b2)" transform="rotate(-15 240 10)"/>
<ellipse cx="290" cy="4" rx="16" ry="3.5" fill="#f2c648" filter="url(#b2)"/>
<ellipse cx="330" cy="40" rx="36" ry="12" fill="#e28a32" filter="url(#b4)" transform="rotate(8 330 40)"/>
<ellipse cx="352" cy="47" rx="16" ry="6" fill="#f6b840" filter="url(#b3)" transform="rotate(15 352 47)"/>
<ellipse cx="150" cy="70" rx="190" ry="24" fill="#cc783c" filter="url(#b14)"/>
<ellipse cx="30" cy="68" rx="50" ry="14" fill="#c87a42" filter="url(#b8)"/>
<ellipse cx="30" cy="101" rx="50" ry="7" fill="#f2aa48" filter="url(#b3)"/>
<ellipse cx="22" cy="107" rx="24" ry="2.2" fill="#b4522a" filter="url(#b1)"/>
<ellipse cx="60" cy="90" rx="70" ry="8" fill="#e89238" filter="url(#b6)"/>
<ellipse cx="110" cy="120" rx="120" ry="12" fill="#e6883a" filter="url(#b8)"/>
<ellipse cx="222" cy="106" rx="38" ry="7" fill="#eaa444" filter="url(#b3)"/>
<ellipse cx="236" cy="102" rx="14" ry="5" fill="#f8c450" filter="url(#b2)"/>
<g fill="#a64a26" filter="url(#cls)"><circle cx="300" cy="110" r="7"/><circle cx="315" cy="108" r="8"/><circle cx="332" cy="109" r="8"/><circle cx="350" cy="110" r="7"/><circle cx="365" cy="111" r="6"/><circle cx="380" cy="112" r="5"/></g>
<g fill="#bf5e2c" filter="url(#cl2)"><circle cx="20" cy="140" r="14"/><circle cx="45" cy="138" r="12"/><circle cx="70" cy="134" r="12"/><circle cx="95" cy="132" r="12"/><circle cx="120" cy="136" r="12"/><circle cx="150" cy="140" r="12"/><circle cx="172" cy="130" r="16"/><circle cx="185" cy="150" r="18"/></g>
<ellipse cx="225" cy="140" rx="44" ry="24" fill="#c8682e" filter="url(#b4)"/>
<ellipse cx="255" cy="170" rx="84" ry="15" fill="#ac4c28" filter="url(#b4)"/>
<ellipse cx="215" cy="150" rx="40" ry="20" fill="#bc5a2a" filter="url(#b6)"/>
<ellipse cx="300" cy="140" rx="46" ry="14" fill="#d8804a" filter="url(#b6)"/>
<ellipse cx="330" cy="168" rx="50" ry="12" fill="#c0602e" filter="url(#b4)"/>
<ellipse cx="252" cy="126" rx="7" ry="10" fill="#ffc234" filter="url(#b2)"/>
<ellipse cx="358" cy="140" rx="13" ry="16" fill="#ffd232" filter="url(#b3)"/>
<ellipse cx="360" cy="120" rx="10" ry="6" fill="#f8c040" filter="url(#b2)"/>
<g fill="#f6c468" filter="url(#cl)"><circle cx="95" cy="155" r="12"/><circle cx="110" cy="150" r="13"/><circle cx="128" cy="156" r="12"/><circle cx="142" cy="162" r="10"/><circle cx="84" cy="166" r="12"/><circle cx="104" cy="170" r="14"/><circle cx="126" cy="172" r="13"/><circle cx="148" cy="174" r="9"/><circle cx="70" cy="176" r="9"/></g>
<g fill="#ffe07a" filter="url(#cl)"><circle cx="104" cy="156" r="8"/><circle cx="118" cy="154" r="7"/><circle cx="112" cy="164" r="7"/></g>
<g fill="#f2bc70" filter="url(#cl)"><circle cx="4" cy="156" r="10"/><circle cx="8" cy="172" r="13"/><circle cx="26" cy="178" r="12"/><circle cx="40" cy="170" r="8"/><circle cx="20" cy="190" r="14"/></g>
<g fill="#f8cc80" filter="url(#cls)"><circle cx="170" cy="176" r="10"/><circle cx="186" cy="180" r="9"/><circle cx="196" cy="186" r="8"/></g>
<g fill="#ffe0a0" filter="url(#b2)" opacity="0.55"><circle cx="268" cy="163" r="3"/><circle cx="280" cy="166" r="3.4"/><circle cx="292" cy="168" r="3"/><circle cx="238" cy="172" r="3"/><circle cx="330" cy="178" r="3"/></g>
<rect x="-10" y="188" width="420" height="50" fill="#c97a38" filter="url(#b4)"/>
<ellipse cx="110" cy="206" rx="66" ry="14" fill="#e6a458" filter="url(#b4)"/>
<ellipse cx="20" cy="212" rx="26" ry="12" fill="#dca060" filter="url(#b4)"/>
<ellipse cx="290" cy="200" rx="70" ry="6" fill="#dc9048" filter="url(#b4)"/>
<ellipse cx="250" cy="220" rx="120" ry="7" fill="#d88c40" filter="url(#b4)"/>
<g fill="#e6c24c" filter="url(#cls)"><circle cx="466" cy="8" r="6"/><circle cx="478" cy="10" r="6"/><circle cx="490" cy="9" r="6"/><circle cx="500" cy="16" r="6"/><circle cx="512" cy="22" r="6"/><circle cx="524" cy="24" r="5"/><circle cx="534" cy="25" r="4"/></g>
<ellipse cx="546" cy="37" rx="7" ry="3.5" fill="#e8cc50" filter="url(#b1)"/>
<ellipse cx="598" cy="40" rx="44" ry="14" fill="#94683c" filter="url(#b4)" transform="rotate(8 598 40)"/>
<ellipse cx="640" cy="56" rx="34" ry="6" fill="#a07840" filter="url(#b3)"/>
<ellipse cx="700" cy="56" rx="44" ry="6" fill="#a88044" filter="url(#b3)"/>
<ellipse cx="600" cy="8" rx="60" ry="10" fill="#ee9a34" filter="url(#b6)"/>
<ellipse cx="704" cy="10" rx="44" ry="14" fill="#de7e2a" filter="url(#b6)"/>
<ellipse cx="690" cy="34" rx="50" ry="10" fill="#ffd650" filter="url(#b6)"/>
<path d="M362 24 L560 64" stroke="#b07868" stroke-width="3" opacity="0.55" filter="url(#b2)"/>
<ellipse cx="395" cy="48" rx="40" ry="7" fill="#e8982e" filter="url(#b3)"/>
<ellipse cx="440" cy="56" rx="16" ry="3" fill="#e8a038" filter="url(#b2)"/>
<ellipse cx="452" cy="70" rx="16" ry="3" fill="#eaa83c" filter="url(#b2)"/>
<g fill="#ffd44a" filter="url(#cls)"><circle cx="376" cy="104" r="8"/><circle cx="390" cy="102" r="7"/><circle cx="400" cy="106" r="6"/></g>
<ellipse cx="385" cy="128" rx="26" ry="16" fill="#ffc834" filter="url(#b4)"/>
<ellipse cx="380" cy="150" rx="24" ry="10" fill="#f6b63c" filter="url(#b4)"/>
<ellipse cx="384" cy="111" rx="18" ry="2.4" fill="#a04a22" filter="url(#b1)"/>
<ellipse cx="447" cy="112" rx="12" ry="6" fill="#f8c244" filter="url(#b2)"/>
<ellipse cx="448" cy="117.5" rx="11" ry="1.3" fill="#b04a28" filter="url(#b1)"/>
<ellipse cx="520" cy="102" rx="14" ry="2" fill="#8a6038" filter="url(#b1)" opacity="0.8"/>
<ellipse cx="500" cy="138" rx="56" ry="11" fill="#e0885a" filter="url(#b6)"/>
<ellipse cx="395" cy="186" rx="40" ry="14" fill="#e09a58" filter="url(#b6)"/>
<rect x="0" y="0" width="739" height="231" fill="url(#sun)"/>
<ellipse cx="570" cy="192" rx="150" ry="32" fill="#fff068" filter="url(#b14)" opacity="0.85"/>
<ellipse cx="520" cy="205" rx="90" ry="22" fill="#ffec60" filter="url(#b8)" opacity="0.7"/>
<ellipse cx="705" cy="150" rx="50" ry="60" fill="#ffe862" filter="url(#b14)" opacity="0.7"/>
<ellipse cx="690" cy="60" rx="60" ry="30" fill="#ffe460" filter="url(#b14)" opacity="0.5"/>
<ellipse cx="730" cy="100" rx="12" ry="30" fill="#e8985c" filter="url(#b4)" opacity="0.8"/>
<ellipse cx="734" cy="178" rx="10" ry="12" fill="#c48c4c" filter="url(#b3)" opacity="0.9"/>
<ellipse cx="640" cy="184" rx="120" ry="2.6" fill="#eaa844" filter="url(#b2)" opacity="0.8"/>
<ellipse cx="420" cy="218" rx="70" ry="10" fill="#eeb060" filter="url(#b6)" opacity="0.7"/>
<ellipse cx="596" cy="38" rx="44" ry="13" fill="#8e6238" filter="url(#b4)" opacity="0.8" transform="rotate(8 596 38)"/>
<ellipse cx="575" cy="30" rx="26" ry="9" fill="#86593a" filter="url(#b3)" opacity="0.8"/>
<ellipse cx="668" cy="57" rx="60" ry="5" fill="#a67c40" filter="url(#b3)" opacity="0.75"/>
<ellipse cx="700" cy="8" rx="50" ry="12" fill="#e08a2c" filter="url(#b6)" opacity="0.85"/>
<ellipse cx="600" cy="6" rx="50" ry="7" fill="#ec9632" filter="url(#b4)" opacity="0.9"/>
<rect x="642" y="-5" width="4" height="240" fill="#fffbe0" opacity="0.9" filter="url(#b1)"/>
<path d="M555 133 L610 131 L739 134.5 L610 136 Z" fill="#fffbe8" opacity="0.9" filter="url(#b1)"/>
<path d="M430 131 L600 129.5 L600 133 Z" fill="#fff2c0" opacity="0.55" filter="url(#b1)"/>
<circle cx="644" cy="133" r="23" fill="#ffffff" filter="url(#b3)"/>
<path d="M566 118 A88 88 0 0 1 722 118" fill="none" stroke="#fff2b8" stroke-width="2" opacity="0.55" stroke-dasharray="10 5" filter="url(#b1)"/>
<path d="M579 77 L597 91 M597 77 L579 91" stroke="#fff6c0" stroke-width="2.4" opacity="0.75" filter="url(#b1)"/>
<path d="M691 77 L709 91 M709 77 L691 91" stroke="#fff6c0" stroke-width="2.4" opacity="0.75" filter="url(#b1)"/>
<path d="M579 179 L597 193 M597 179 L579 193" stroke="#fff6c0" stroke-width="2.4" opacity="0.75" filter="url(#b1)"/>
<path d="M691 179 L709 193 M709 179 L691 193" stroke="#fff6c0" stroke-width="2.4" opacity="0.75" filter="url(#b1)"/>
<g fill="#43160f" filter="url(#b1)">
<ellipse cx="419.2" cy="70.5" rx="9.8" ry="9.6"/>
<path d="M408.5 68 L411 61.5 L417 59.8 L424 60.2 L428.5 63.5 L430.3 69 Z"/>
<path d="M411 79 L428 79 L429 84 L434.6 88.5 L436.6 118 L437.4 136 L438.5 150 L443.6 187.5 L402 187.5 L404.2 150 L402.6 136 L403.4 118 L404.4 88.5 L410 84 Z"/>
<path d="M409 186 H417.8 V200 L416 202.5 H408.6 Z M427 186 H436 L436.6 202.5 H428.4 L427 200 Z"/>
</g>
<ellipse cx="423" cy="214" rx="20" ry="8" fill="#c8742e" filter="url(#b4)" opacity="0.4"/>
</g></svg>
<span class="t bao" style="left:58px;top:31.90px;font-size:58px;line-height:58px;color:#0a0503;font-style:italic;transform:scaleX(1.1455);">BAOBAB</span>
<div class="b" style="left:7px;top:243px;width:57px;height:45.5px;background:#555;"></div>
<div class="b" style="left:7px;top:290px;width:57px;height:45px;background:#555;"></div>
<svg class="b" style="left:18px;top:251px;" width="33" height="30" viewBox="0 0 33 30"><path d="M3.2 25 V5.2 Q3.2 3.6 4.8 3.6 H11.2 L14.2 7.2 H25.2 Q26.6 7.2 26.6 8.8 V12.5" fill="none" stroke="#b4b4b4" stroke-width="2.4" stroke-linejoin="round"/><path d="M3 27.5 L8.2 13.6 Q8.6 12.6 9.8 12.6 H30.6 Q32 12.6 31.5 14 L26.8 26.6 Q26.4 27.5 25.2 27.5 Z" fill="#cdcdcd"/><path d="M3 27.5 L8.2 13.6" stroke="#e4e4e4" stroke-width="1" fill="none"/></svg>
<svg class="b" style="left:18px;top:297.5px;" width="33" height="30" viewBox="0 0 33 30"><path d="M3.2 25 V5.2 Q3.2 3.6 4.8 3.6 H11.2 L14.2 7.2 H25.2 Q26.6 7.2 26.6 8.8 V12.5" fill="none" stroke="#b4b4b4" stroke-width="2.4" stroke-linejoin="round"/><path d="M3 27.5 L8.2 13.6 Q8.6 12.6 9.8 12.6 H30.6 Q32 12.6 31.5 14 L26.8 26.6 Q26.4 27.5 25.2 27.5 Z" fill="#cdcdcd"/><path d="M3 27.5 L8.2 13.6" stroke="#e4e4e4" stroke-width="1" fill="none"/></svg>
<span class="t" style="left:97px;top:254.99px;font-size:26px;line-height:26px;color:#f7b017;font-weight:bold;transform:scaleX(0.9358);">Project</span>
<span class="t" style="left:117px;top:301.59px;font-size:26px;line-height:26px;color:#f7b017;font-weight:bold;transform:scaleX(0.9118);">Serie</span>
<div class="b" style="left:206px;top:243px;width:404px;height:44px;background:#5d5d5d;border-radius:5px;"></div>
<div class="b" style="left:565px;top:243px;width:2px;height:44px;background:#525252;"></div>
<svg class="b" style="left:577px;top:258px;" width="22" height="14" viewBox="0 0 22 14"><path d="M0.5 1 L21.5 1 L11 13 Z" fill="#c6c6c6"/></svg>
<div class="b" style="left:206px;top:290px;width:404px;height:43px;background:#5d5d5d;border-radius:5px;"></div>
<div class="b" style="left:565px;top:290px;width:2px;height:43px;background:#525252;"></div>
<svg class="b" style="left:577px;top:304.5px;" width="22" height="14" viewBox="0 0 22 14"><path d="M0.5 1 L21.5 1 L11 13 Z" fill="#c6c6c6"/></svg>
<span class="t u" style="left:214.5px;top:254.99px;font-size:26px;line-height:26px;color:#dcdcdc;transform:scaleX(0.8777);">LEAGUE_OF_LEGEND</span>
<span class="t u" style="left:214.5px;top:301.59px;font-size:26px;line-height:26px;color:#dcdcdc;transform:scaleX(0.9162);">NOCTURNE</span>
<svg class="b" style="left:625px;top:243px;" width="51" height="46" viewBox="0 0 51 46"><path d="M14.50 1.50 L17.41 5.48 L22.28 4.72 L21.52 9.59 L25.50 12.50 L21.52 15.41 L22.28 20.28 L17.41 19.52 L14.50 23.50 L11.59 19.52 L6.72 20.28 L7.48 15.41 L3.50 12.50 L7.48 9.59 L6.72 4.72 L11.59 5.48 Z" fill="#d6d6d6"/><circle cx="14.5" cy="12.5" r="4.1" fill="#444"/><circle cx="37.3" cy="11.8" r="4" fill="#f0782f"/><path d="M33 19.5 L39 21 L35.2 31 L40 35 L39.5 43.5 M35.2 31 L29 35.5 L20.5 32.5 M35 20.5 L28.5 22 L26 28 M39 21 L42.5 25.5 L46 21.5" fill="none" stroke="#f0782f" stroke-width="4.4" stroke-linecap="round" stroke-linejoin="round"/></svg>
<svg class="b" style="left:700px;top:251px;" width="38" height="28" viewBox="0 0 38 28"><path d="M2.6 1.2 H11.6 L15.4 6 H35.6 V26.4 H2.6 Z" fill="#e9743c"/></svg>
<svg class="b" style="left:630.8px;top:293.8px;" width="38" height="37" viewBox="0 0 38 37"><path d="M5.2 4.7550561797752815 L32.8 32.04494382022472 M32.8 4.7550561797752815 L5.2 32.04494382022472" stroke="#e2d39b" stroke-width="4.6" fill="none"/><path d="M1.2 0.8 h13 l-13 13 Z M36.8 0.8 h-13 l13 13 Z M1.2 36 h13 l-13 -13 Z M36.8 36 h-13 l13 -13 Z" fill="#e2d39b"/></svg>
<svg class="b" style="left:699.2px;top:296px;" width="40" height="34" viewBox="0 0 40 34"><path d="M5.2 5.221276595744682 L34.8 27.57872340425532 M34.8 5.221276595744682 L5.2 27.57872340425532" stroke="#e2d39b" stroke-width="4.6" fill="none"/><path d="M1.2 2.2 h13 l-13 10.5 Z M38.8 2.2 h-13 l13 10.5 Z M1.2 30.6 h13 l-13 -10.5 Z M38.8 30.6 h-13 l13 -10.5 Z" fill="#e2d39b"/></svg>
<div class="b" style="left:6px;top:336.5px;width:743px;height:86.5px;background:#383838;"></div>
<div class="b" style="left:6px;top:376px;width:743px;height:2.8px;background:#2f2f2f;"></div>
<div class="b" style="left:12px;top:341px;width:98.5px;height:35px;background:#3c3c3c;border-radius:5px 5px 0 0;border:1px solid #313131;border-bottom:none;"></div>
<span class="t u" style="left:34.5px;top:347.49px;font-size:26px;line-height:26px;color:#a8a8a8;transform:scaleX(0.8697);">GEN</span>
<div class="b" style="left:115px;top:341px;width:103.5px;height:35px;background:#3c3c3c;border-radius:5px 5px 0 0;border:1px solid #313131;border-bottom:none;"></div>
<span class="t u" style="left:141px;top:347.49px;font-size:26px;line-height:26px;color:#a8a8a8;transform:scaleX(0.8737);">GEO</span>
<div class="b" style="left:223.5px;top:341px;width:92.5px;height:35px;background:#3c3c3c;border-radius:5px 5px 0 0;border:1px solid #313131;border-bottom:none;"></div>
<span class="t u" style="left:248.5px;top:347.49px;font-size:26px;line-height:26px;color:#a8a8a8;transform:scaleX(0.8760);">RIG</span>
<div class="b" style="left:320px;top:341px;width:109px;height:35px;background:#3c3c3c;border-radius:5px 5px 0 0;border:1px solid #313131;border-bottom:none;"></div>
<span class="t u" style="left:345px;top:347.49px;font-size:26px;line-height:26px;color:#a8a8a8;transform:scaleX(0.9951);">ANM</span>
<div class="b" style="left:434px;top:341px;width:97px;height:35px;background:#3c3c3c;border-radius:5px 5px 0 0;border:1px solid #313131;border-bottom:none;"></div>
<span class="t u" style="left:458.5px;top:347.49px;font-size:26px;line-height:26px;color:#a8a8a8;transform:scaleX(0.9095);">LDV</span>
<div class="b" style="left:535.5px;top:341px;width:94.5px;height:35px;background:#3c3c3c;border-radius:5px 5px 0 0;border:1px solid #313131;border-bottom:none;"></div>
<span class="t u" style="left:560px;top:347.49px;font-size:26px;line-height:26px;color:#a8a8a8;transform:scaleX(0.8699);">VFX</span>
<div class="b" style="left:632.5px;top:341px;width:102.8px;height:35px;background:#464646;border-radius:5px 5px 0 0;"></div>
<span class="t u" style="left:659.5px;top:347.49px;font-size:26px;line-height:26px;color:#eee;transform:scaleX(0.9229);">RND</span>
<div class="b" style="left:12px;top:384px;width:178.5px;height:36.5px;background:#464646;border-radius:5px 5px 0 0;"></div>
<span class="t u" style="left:69px;top:390.99px;font-size:26px;line-height:26px;color:#eee;transform:scaleX(0.9769);">MAIN</span>
<div class="b" style="left:196px;top:384px;width:179.5px;height:36.5px;background:#3c3c3c;border-radius:5px 5px 0 0;border:1px solid #313131;border-bottom:none;"></div>
<span class="t u" style="left:228px;top:390.99px;font-size:26px;line-height:26px;color:#a8a8a8;transform:scaleX(0.9039);">LIGHTING</span>
<div class="b" style="left:380px;top:384px;width:178.5px;height:36.5px;background:#3c3c3c;border-radius:5px 5px 0 0;border:1px solid #313131;border-bottom:none;"></div>
<span class="t u" style="left:442.5px;top:390.99px;font-size:26px;line-height:26px;color:#a8a8a8;transform:scaleX(0.9468);">AOV</span>
<div class="b" style="left:560px;top:380px;width:185px;height:40.5px;background:#414141;"></div>
<div class="b" style="left:6px;top:420.5px;width:743px;height:1680px;background:#2d2d2d;"></div>
<div class="b" style="left:9.8px;top:423px;width:734.9px;height:1673.5px;background:#444;"></div>
<div class="b" style="left:31.4px;top:455.5px;width:212.3px;height:6px;background:#2c2c2c;"></div>
<div class="b" style="left:511.4px;top:455.5px;width:212.3px;height:6px;background:#2c2c2c;"></div>
<span class="t" style="left:260.5px;top:447.84px;font-size:25px;line-height:25px;color:#ffd21a;font-weight:bold;transform:scaleX(1.0130);">Ten Commandment</span>
<svg class="b" style="left:80px;top:496px;" width="116" height="112" viewBox="0 0 116 112"><defs><linearGradient id="gf" x1="0" y1="0" x2="0" y2="1"><stop offset="0" stop-color="#e2d096"/><stop offset="0.5" stop-color="#bba262"/><stop offset="1" stop-color="#94763a"/></linearGradient></defs><path d="M3.7 4.4 H39 L49.5 21.5 H110.8 V106.5 H3.7 Z" fill="#0a0a0a"/><path d="M6.5 7.2 H37.4 L48 24.3 H108 V103.7 H6.5 Z" fill="url(#gf)"/><path d="M13.5 13.4 H33.5 L37.4 19 H13.5 Z" fill="#0a0a0a"/><path d="M12.5 27 H102 V31 H12.5 Z" fill="#3a2c10" opacity="0.55"/><rect x="15.5" y="34" width="83.5" height="61" fill="#1a1608"/><rect x="18" y="36.5" width="78.5" height="56" fill="#07122b"/><path d="M10 97 L27.5 54.5 H60.5 L70.8 35 H99.5" fill="none" stroke="#0d0b05" stroke-width="11" stroke-linejoin="miter"/><path d="M10 97 L27.5 54.5 H60.5 L70.8 35 H99.5" fill="none" stroke="url(#gf)" stroke-width="8" stroke-linejoin="miter"/><path d="M10 97 L27.5 54.5 H60.5 L70.8 35 H99.5" fill="none" stroke="#2a200a" stroke-width="1.6" stroke-linejoin="miter"/><path d="M98.5 30 V98" stroke="#2a200a" stroke-width="1.6"/><path d="M10 98 H104" stroke="#2a200a" stroke-width="1.4" opacity="0.8"/></svg>
<svg class="b" style="left:306px;top:490px;" width="142" height="123" viewBox="0 0 142 123"><defs><linearGradient id="gc" x1="0" y1="0" x2="0" y2="1"><stop offset="0" stop-color="#e2d096"/><stop offset="0.5" stop-color="#bba262"/><stop offset="1" stop-color="#94763a"/></linearGradient></defs><path d="M37.5 5.7 H66 L71.5 11.5 L77 5.7 H105.8 L138.2 95.3 V100.4 L129.7 105 H110.9 V109.3 L98.1 120.4 H44.3 L31.5 109.3 V105 H13.6 L4.7 100.4 V95.3 Z" fill="#060606"/><path d="M35 106.5 H107.5 V108.3 L96.8 117.6 H45.6 L35 108.3 Z" fill="url(#gc)"/><path d="M38 106.5 H104.5 L103 109 H39.5 Z" fill="#0b0b0b"/><path d="M49.5 112 H93 L91.5 114.6 H51 Z" fill="#2e2209"/><path d="M8 96.5 H135 V99 L128.5 102.3 H15 L8 99 Z" fill="url(#gc)"/><path d="M39.8 8.8 H64.6 L71.5 16 L78.4 8.8 H103.5 L134.5 96.5 H8.5 Z" fill="url(#gc)"/><path d="M45.6 15.8 H97.7 L122.3 82 L117 96.5 H26 L20.7 82 Z" fill="#0a0805"/><path d="M47.8 18.6 H95.5 L119 82 L114.5 94 H28.5 L24.3 82 Z" fill="url(#gc)"/><path d="M49.6 21.4 H93.7 L113 77.5 L108.6 93.2 H34.6 L30.2 77.5 Z" fill="#0b1222"/><path d="M51 23.4 H92.3 L110.4 77 L106.6 91.2 H36.4 L32.6 77 Z" fill="#07122b"/><path d="M52.5 96.5 L71.3 64.5 L90 96.5 Z" fill="#0a0805"/><path d="M55.6 96.5 L71.3 69.8 L87 96.5 Z" fill="url(#gc)"/><path d="M60.8 96.5 L71.3 78.5 L81.8 96.5 Z" fill="#0a0805"/><path d="M63.2 99 L71.3 83.5 L79.4 99 Z" fill="url(#gc)"/><path d="M64 103 L71.3 94 L78.6 103 Z" fill="#0a0805"/><path d="M15 99.2 H62 M81 99.2 H128.5" stroke="#0a0805" stroke-width="1.2"/></svg>
<svg class="b" style="left:521px;top:506px;" width="189" height="92" viewBox="0 0 189 92"><defs><linearGradient id="gp" x1="0" y1="0" x2="0" y2="1"><stop offset="0" stop-color="#e2d096"/><stop offset="0.5" stop-color="#bba262"/><stop offset="1" stop-color="#94763a"/></linearGradient></defs><path d="M42.4 5 H71 L93.6 22 L115.6 5 H144.8 L183.9 45.7 L144.8 87 H115.6 L93.6 70 L71 87 H42.4 L4.5 45.7 Z" fill="#060606"/><path d="M45.2 11.3 H68.3 L93.6 30.8 L118.4 11.3 H142 L174.8 45.7 L142 80.7 H118.4 L93.6 61.2 L68.3 80.7 H45.2 L13.4 45.7 Z" fill="#070707" stroke="url(#gp)" stroke-width="6.4" stroke-linejoin="miter"/><path d="M45.2 11.3 H68.3 L93.6 30.8 L118.4 11.3 H142 L174.8 45.7 L142 80.7 H118.4 L93.6 61.2 L68.3 80.7 H45.2 L13.4 45.7 Z" fill="none" stroke="#3a2c10" stroke-width="0.8" stroke-linejoin="miter" opacity="0.6"/><path d="M79.5 12 L93.6 23.5 L107.5 12 V24.5 L93.6 35.5 L79.5 24.5 Z" fill="#060606"/><path d="M79.5 80 L93.6 68.5 L107.5 80 V67.5 L93.6 56.5 L79.5 67.5 Z" fill="#060606"/><path d="M25 45.7 L47 21 H63.5 L69.5 27 H77 L93.6 45.7 L77 64.5 H69.5 L63.5 70.5 H47 Z" fill="#07122b" stroke="url(#gp)" stroke-width="3.8" stroke-linejoin="miter"/><path d="M162.3 45.7 L140.3 21 H123.8 L117.8 27 H110.3 L93.6 45.7 L110.3 64.5 H117.8 L123.8 70.5 H140.3 Z" fill="#07122b" stroke="url(#gp)" stroke-width="3.8" stroke-linejoin="miter"/><path d="M72 23.2 H80.6 L114 61.2 H121" fill="none" stroke="#0b0905" stroke-width="4.6"/><path d="M115.2 23.2 H106.6 L73.2 61.2 H66.2" fill="none" stroke="#0b0905" stroke-width="4.6"/><path d="M66.2 30.4 H73.2 L106.6 68.4 H115.2" fill="none" stroke="#0b0905" stroke-width="4.6"/><path d="M121 30.4 H114 L80.6 68.4 H72" fill="none" stroke="#0b0905" stroke-width="4.6"/><path d="M72 23.2 H80.6 L114 61.2 H121" fill="none" stroke="url(#gp)" stroke-width="2.4"/><path d="M115.2 23.2 H106.6 L73.2 61.2 H66.2" fill="none" stroke="url(#gp)" stroke-width="2.4"/><path d="M66.2 30.4 H73.2 L106.6 68.4 H115.2" fill="none" stroke="url(#gp)" stroke-width="2.4"/><path d="M121 30.4 H114 L80.6 68.4 H72" fill="none" stroke="url(#gp)" stroke-width="2.4"/></svg>
<span class="t" style="left:96.7px;top:632.21px;font-size:25.5px;line-height:25.5px;color:#e6d39a;font-weight:bold;transform:scaleX(0.9034);">FOLDER</span>
<span class="t" style="left:268.8px;top:632.21px;font-size:25.5px;line-height:25.5px;color:#e6d39a;font-weight:bold;transform:scaleX(1.0464);">COMMANDMENT</span>
<span class="t" style="left:558.9px;top:632.21px;font-size:25.5px;line-height:25.5px;color:#e6d39a;font-weight:bold;transform:scaleX(0.9268);">PIPELINE</span>
<div class="b" style="left:31.4px;top:679.5px;width:218.9px;height:6px;background:#2c2c2c;"></div>
<div class="b" style="left:505px;top:679.5px;width:218.7px;height:6px;background:#2c2c2c;"></div>
<span class="t" style="left:300px;top:672.34px;font-size:25px;line-height:25px;color:#ff9a2e;font-weight:bold;transform:scaleX(0.9765);">Scene Config</span>
<div class="b" style="left:31.4px;top:721px;width:57.6px;height:44.5px;background:#555;"></div>
<div class="b" style="left:31.4px;top:767.5px;width:57.6px;height:45px;background:#555;"></div>
<svg class="b" style="left:43.5px;top:729px;" width="33" height="30" viewBox="0 0 33 30"><path d="M3.2 25 V5.2 Q3.2 3.6 4.8 3.6 H11.2 L14.2 7.2 H25.2 Q26.6 7.2 26.6 8.8 V12.5" fill="none" stroke="#b4b4b4" stroke-width="2.4" stroke-linejoin="round"/><path d="M3 27.5 L8.2 13.6 Q8.6 12.6 9.8 12.6 H30.6 Q32 12.6 31.5 14 L26.8 26.6 Q26.4 27.5 25.2 27.5 Z" fill="#cdcdcd"/><path d="M3 27.5 L8.2 13.6" stroke="#e4e4e4" stroke-width="1" fill="none"/></svg>
<svg class="b" style="left:43.5px;top:775.5px;" width="33" height="30" viewBox="0 0 33 30"><path d="M3.2 25 V5.2 Q3.2 3.6 4.8 3.6 H11.2 L14.2 7.2 H25.2 Q26.6 7.2 26.6 8.8 V12.5" fill="none" stroke="#b4b4b4" stroke-width="2.4" stroke-linejoin="round"/><path d="M3 27.5 L8.2 13.6 Q8.6 12.6 9.8 12.6 H30.6 Q32 12.6 31.5 14 L26.8 26.6 Q26.4 27.5 25.2 27.5 Z" fill="#cdcdcd"/><path d="M3 27.5 L8.2 13.6" stroke="#e4e4e4" stroke-width="1" fill="none"/></svg>
<div class="b" style="left:115.3px;top:731.4px;width:28px;height:28px;border-radius:50%;background:#2b2b2b;"></div>
<div class="b" style="left:118px;top:734.1px;width:22.6px;height:22.6px;border-radius:50%;background:#d4d4d4;"></div>
<div class="b" style="left:115.3px;top:777.5px;width:28px;height:28px;border-radius:50%;background:#2b2b2b;"></div>
<span class="t u" style="left:159px;top:733.71px;font-size:25.5px;line-height:25.5px;color:#dcdcdc;transform:scaleX(0.9674);">Asset</span>
<span class="t u" style="left:159.5px;top:779.91px;font-size:25.5px;line-height:25.5px;color:#dcdcdc;transform:scaleX(0.9366);">Seq</span>
<div class="b" style="left:243.7px;top:721px;width:480px;height:43.5px;background:#5d5d5d;border-radius:5px;"></div>
<div class="b" style="left:676px;top:721px;width:2px;height:43.5px;background:#525252;"></div>
<svg class="b" style="left:689.35px;top:735.75px;" width="22" height="14" viewBox="0 0 22 14"><path d="M0.5 1 L21.5 1 L11 13 Z" fill="#c6c6c6"/></svg>
<div class="b" style="left:243.7px;top:767px;width:480px;height:44px;background:#5d5d5d;border-radius:5px;"></div>
<div class="b" style="left:676px;top:767px;width:2px;height:44px;background:#525252;"></div>
<svg class="b" style="left:689.35px;top:782px;" width="22" height="14" viewBox="0 0 22 14"><path d="M0.5 1 L21.5 1 L11 13 Z" fill="#c6c6c6"/></svg>
<div class="b" style="left:31.4px;top:814px;width:229.1px;height:51.7px;background:#5d5d5d;border-radius:2px;"></div>
<div class="b" style="left:263px;top:814px;width:228px;height:51.7px;background:#5d5d5d;border-radius:2px;"></div>
<div class="b" style="left:494px;top:814px;width:229.7px;height:51.7px;background:#5d5d5d;border-radius:2px;"></div>
<span class="t u" style="left:78.5px;top:828.41px;font-size:25.5px;line-height:25.5px;color:#eee;transform:scaleX(0.9665);">Creat Scene</span>
<span class="t u" style="left:307px;top:828.41px;font-size:25.5px;line-height:25.5px;color:#eee;transform:scaleX(0.9987);">Open Scene</span>
<span class="t u" style="left:511.4px;top:828.41px;font-size:25.5px;line-height:25.5px;color:#eee;transform:scaleX(1.0058);">Increment Scene</span>
<div class="b" style="left:100.4px;top:890px;width:554.3px;height:50.4px;background:#07122a;border:4.6px solid #e9cf95;"></div>
<span class="t" style="left:325.3px;top:904.41px;font-size:25.5px;line-height:25.5px;color:#f1e3bb;font-weight:bold;transform:scaleX(0.9175);">PUBLISH</span>
<div class="b" style="left:31.4px;top:965.7px;width:218.9px;height:6.3px;background:#2c2c2c;"></div>
<div class="b" style="left:505px;top:965.7px;width:218.7px;height:6.3px;background:#2c2c2c;"></div>
<span class="t" style="left:286px;top:958.84px;font-size:25px;line-height:25px;color:#ff9a2e;font-weight:bold;transform:scaleX(1.0405);">Import / Export</span>
<span class="t u" style="left:31.8px;top:1020.11px;font-size:25.5px;line-height:25.5px;color:#dcdcdc;transform:scaleX(0.9249);">Sets</span>
<div class="b" style="left:128.7px;top:1007px;width:595px;height:43.7px;background:#5d5d5d;border-radius:5px;"></div>
<div class="b" style="left:676px;top:1007px;width:2px;height:43.7px;background:#525252;"></div>
<svg class="b" style="left:689.35px;top:1021.85px;" width="22" height="14" viewBox="0 0 22 14"><path d="M0.5 1 L21.5 1 L11 13 Z" fill="#c6c6c6"/></svg>
<span class="t u" style="left:31.8px;top:1066.11px;font-size:25.5px;line-height:25.5px;color:#dcdcdc;transform:scaleX(0.9802);">Type</span>
<div class="b" style="left:131.1px;top:1065.8px;width:22.4px;height:22.4px;border-radius:50%;background:#2b2b2b;"></div>
<span class="t u" style="left:170.5px;top:1066.11px;font-size:25.5px;line-height:25.5px;color:#dcdcdc;transform:scaleX(0.9729);">DKAnim</span>
<div class="b" style="left:329.4px;top:1065.8px;width:22.4px;height:22.4px;border-radius:50%;background:#2b2b2b;"></div>
<span class="t u" style="left:369px;top:1066.11px;font-size:25.5px;line-height:25.5px;color:#dcdcdc;transform:scaleX(0.9817);">gCache</span>
<div class="b" style="left:527.8px;top:1065.8px;width:22.4px;height:22.4px;border-radius:50%;background:#2b2b2b;"></div>
<div class="b" style="left:531px;top:1069px;width:16px;height:16px;border-radius:50%;background:#d4d4d4;"></div>
<span class="t u" style="left:567.2px;top:1066.11px;font-size:25.5px;line-height:25.5px;color:#dcdcdc;transform:scaleX(1.0154);">Alembic</span>
<div class="b" style="left:128.7px;top:1099.7px;width:250px;height:52.3px;background:#5d5d5d;border-radius:2px;"></div>
<div class="b" style="left:381.6px;top:1099.7px;width:42.9px;height:52.3px;background:#5d5d5d;border-radius:2px;"></div>
<div class="b" style="left:427.8px;top:1099.7px;width:249.2px;height:52.3px;background:#5d5d5d;border-radius:2px;"></div>
<div class="b" style="left:679.8px;top:1099.7px;width:43.9px;height:52.3px;background:#5d5d5d;border-radius:2px;"></div>
<span class="t u" style="left:213.4px;top:1114.41px;font-size:25.5px;line-height:25.5px;color:#eee;transform:scaleX(1.0847);">Import</span>
<span class="t u" style="left:513.9px;top:1114.41px;font-size:25.5px;line-height:25.5px;color:#eee;transform:scaleX(1.0298);">Export</span>
<span class="t u" style="left:396.5px;top:1116.41px;font-size:25.5px;line-height:25.5px;color:#eee;transform:scaleX(1.1572);">*</span>
<span class="t u" style="left:693.5px;top:1116.41px;font-size:25.5px;line-height:25.5px;color:#eee;transform:scaleX(1.1572);">*</span>
<div class="b" style="left:31.4px;top:1177.7px;width:218.9px;height:6.3px;background:#2c2c2c;"></div>
<div class="b" style="left:505px;top:1177.7px;width:218.7px;height:6.3px;background:#2c2c2c;"></div>
<span class="t" style="left:291.4px;top:1171.34px;font-size:25px;line-height:25px;color:#ff9a2e;font-weight:bold;transform:scaleX(1.0097);">Extra Attribute</span>
<span class="t u" style="left:31.8px;top:1229.91px;font-size:25.5px;line-height:25.5px;color:#dcdcdc;transform:scaleX(1.0620);">Extra Attribute</span>
<span class="t u" style="left:31.8px;top:1328.41px;font-size:25.5px;line-height:25.5px;color:#dcdcdc;transform:scaleX(1.1079);">Mat Attribute</span>
<div class="b" style="left:33px;top:1265px;width:181px;height:42.5px;background:#2b2b2b;border-radius:5px;border:1.5px solid #3b3b3b;"></div>
<div class="b" style="left:218.3px;top:1229.3px;width:22.4px;height:22.4px;border-radius:50%;background:#2b2b2b;"></div>
<div class="b" style="left:221.5px;top:1232.5px;width:16px;height:16px;border-radius:50%;background:#d4d4d4;"></div>
<span class="t u" style="left:258.4px;top:1229.91px;font-size:25.5px;line-height:25.5px;color:#dcdcdc;transform:scaleX(1.0440);">Float</span>
<div class="b" style="left:345.5px;top:1229.3px;width:22.4px;height:22.4px;border-radius:50%;background:#2b2b2b;"></div>
<span class="t u" style="left:385.2px;top:1229.91px;font-size:25.5px;line-height:25.5px;color:#dcdcdc;transform:scaleX(1.0522);">String</span>
<div class="b" style="left:472.4px;top:1229.3px;width:22.4px;height:22.4px;border-radius:50%;background:#2b2b2b;"></div>
<span class="t u" style="left:511.8px;top:1229.91px;font-size:25.5px;line-height:25.5px;color:#dcdcdc;transform:scaleX(0.9011);">RGB</span>
<div class="b" style="left:218.3px;top:1275.2px;width:22.4px;height:22.4px;border-radius:50%;background:#2b2b2b;"></div>
<div class="b" style="left:221.5px;top:1278.4px;width:16px;height:16px;border-radius:50%;background:#d4d4d4;"></div>
<span class="t u" style="left:258.4px;top:1275.71px;font-size:25.5px;line-height:25.5px;color:#dcdcdc;transform:scaleX(1.0468);">Add</span>
<div class="b" style="left:345.5px;top:1275.2px;width:22.4px;height:22.4px;border-radius:50%;background:#2b2b2b;"></div>
<span class="t u" style="left:385.9px;top:1275.71px;font-size:25.5px;line-height:25.5px;color:#dcdcdc;transform:scaleX(0.9657);">Get</span>
<div class="b" style="left:472.4px;top:1275.2px;width:22.4px;height:22.4px;border-radius:50%;background:#2b2b2b;"></div>
<span class="t u" style="left:512.2px;top:1275.71px;font-size:25.5px;line-height:25.5px;color:#dcdcdc;transform:scaleX(0.9456);">Set</span>
<div class="b" style="left:218.3px;top:1328.6px;width:22.4px;height:22.4px;border-radius:50%;background:#2b2b2b;"></div>
<div class="b" style="left:221.5px;top:1331.8px;width:16px;height:16px;border-radius:50%;background:#d4d4d4;"></div>
<span class="t u" style="left:258.4px;top:1328.41px;font-size:25.5px;line-height:25.5px;color:#dcdcdc;transform:scaleX(1.0468);">Add</span>
<div class="b" style="left:345.5px;top:1328.6px;width:22.4px;height:22.4px;border-radius:50%;background:#2b2b2b;"></div>
<span class="t u" style="left:385.9px;top:1328.41px;font-size:25.5px;line-height:25.5px;color:#dcdcdc;transform:scaleX(0.9826);">Del</span>
<div class="b" style="left:472.4px;top:1328.6px;width:22.4px;height:22.4px;border-radius:50%;background:#2b2b2b;"></div>
<span class="t u" style="left:512.2px;top:1328.41px;font-size:25.5px;line-height:25.5px;color:#dcdcdc;transform:scaleX(0.9456);">Set</span>
<div class="b" style="left:597px;top:1261.2px;width:126.7px;height:51.1px;background:#5d5d5d;border-radius:2px;"></div>
<div class="b" style="left:597px;top:1315px;width:126.7px;height:51.6px;background:#5d5d5d;border-radius:2px;"></div>
<span class="t u" style="left:626.9px;top:1275.71px;font-size:25.5px;line-height:25.5px;color:#eee;transform:scaleX(1.0486);">Apply</span>
<span class="t u" style="left:626.9px;top:1328.41px;font-size:25.5px;line-height:25.5px;color:#eee;transform:scaleX(1.0486);">Apply</span>
<div class="b" style="left:33.8px;top:1411.8px;width:22.4px;height:22.4px;border-radius:50%;background:#2b2b2b;"></div>
<div class="b" style="left:37px;top:1415px;width:16px;height:16px;border-radius:50%;background:#d4d4d4;"></div>
<span class="t u" style="left:73.2px;top:1412.11px;font-size:25.5px;line-height:25.5px;color:#dcdcdc;transform:scaleX(0.9541);">Extra</span>
<div class="b" style="left:207.4px;top:1411.8px;width:22.4px;height:22.4px;border-radius:50%;background:#2b2b2b;"></div>
<span class="t u" style="left:246.9px;top:1412.11px;font-size:25.5px;line-height:25.5px;color:#dcdcdc;transform:scaleX(1.0561);">Mat</span>
<div class="b" style="left:380.3px;top:1411.8px;width:22.4px;height:22.4px;border-radius:50%;background:#2b2b2b;"></div>
<span class="t u" style="left:419.7px;top:1412.11px;font-size:25.5px;line-height:25.5px;color:#dcdcdc;transform:scaleX(0.9961);">Ai</span>
<div class="b" style="left:552.9px;top:1411.8px;width:22.4px;height:22.4px;border-radius:50%;background:#2b2b2b;"></div>
<span class="t u" style="left:593px;top:1412.11px;font-size:25.5px;line-height:25.5px;color:#dcdcdc;transform:scaleX(1.0154);">Rnd</span>
<div class="b" style="left:31.4px;top:1444px;width:344.6px;height:51.6px;background:#5d5d5d;border-radius:2px;"></div>
<div class="b" style="left:378.7px;top:1444px;width:345px;height:51.6px;background:#5d5d5d;border-radius:2px;"></div>
<span class="t u" style="left:175.3px;top:1457.71px;font-size:25.5px;line-height:25.5px;color:#eee;transform:scaleX(0.9978);">Copy</span>
<span class="t u" style="left:418.7px;top:1457.71px;font-size:25.5px;line-height:25.5px;color:#eee;transform:scaleX(1.0391);">Transfert To Deformed</span>
<div class="b" style="left:6.3px;top:2101.5px;width:370.3px;height:52px;background:#5d5d5d;border-radius:2px;"></div>
<div class="b" style="left:378.4px;top:2101.5px;width:370.6px;height:52px;background:#5d5d5d;border-radius:2px;"></div>
<span class="t u" style="left:110.3px;top:2116.21px;font-size:25.5px;line-height:25.5px;color:#eee;transform:scaleX(1.0108);">Refresh Script</span>
<span class="t u" style="left:463.3px;top:2116.21px;font-size:25.5px;line-height:25.5px;color:#eee;transform:scaleX(1.0589);">Refresh Window</span>
</aside>
</body>
</html>
